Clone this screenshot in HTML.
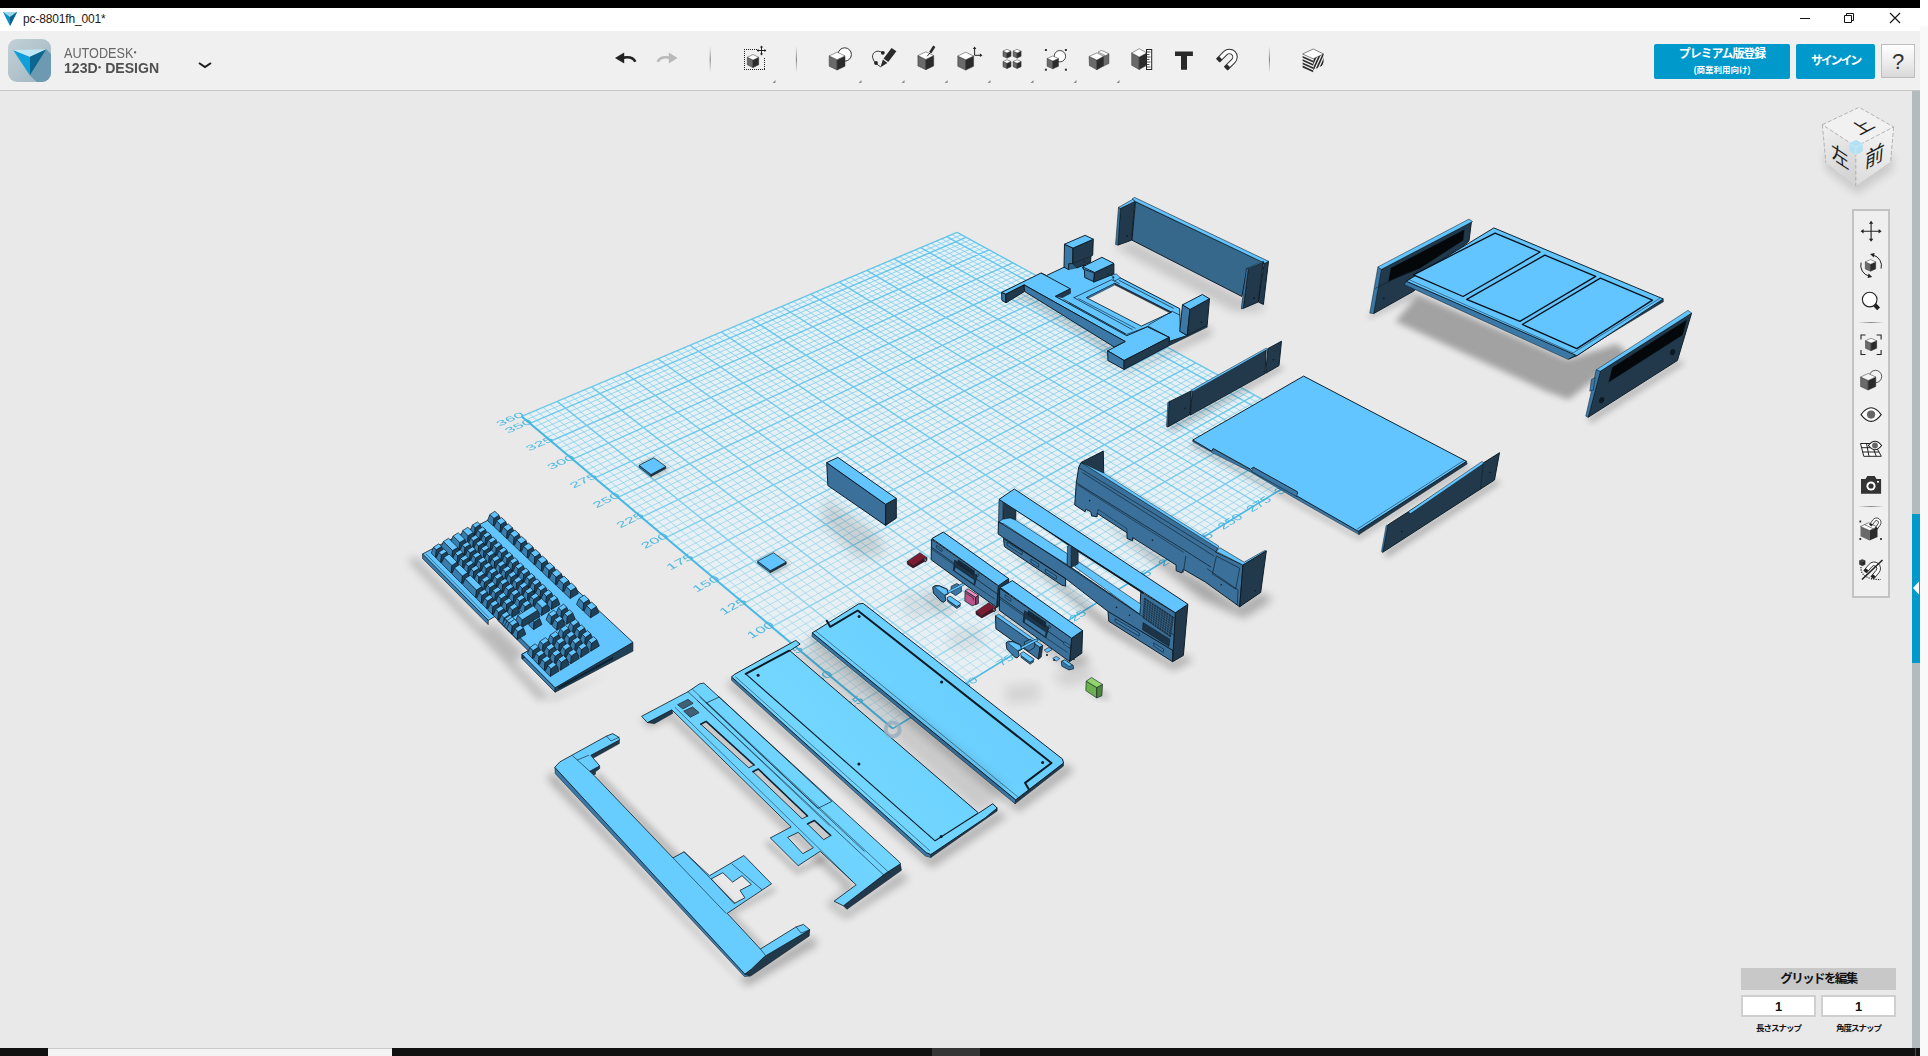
<!DOCTYPE html>
<html lang="ja"><head><meta charset="utf-8"><title>pc-8801fh_001* - 123D Design</title>
<style>
html,body{margin:0;padding:0;}
body{width:1928px;height:1056px;overflow:hidden;position:relative;background:#e9e9e9;font-family:"Liberation Sans","Noto Sans CJK JP",sans-serif;}
#scene{position:absolute;left:0;top:0;}
.abs{position:absolute;}
#topblack{left:0;top:0;width:1920px;height:8px;background:#000;}
#titlebar{left:0;top:8px;width:1920px;height:23px;background:#fff;}
#title{left:23px;top:12px;font-size:12px;line-height:15px;color:#1a1a1a;letter-spacing:-0.15px;}
#rightwhite{left:1920px;top:0;width:8px;height:26px;background:#fff;}
#rightgray{left:1920px;top:26px;width:8px;height:1030px;background:#f9f9f9;}
#toolbar{left:0;top:31px;width:1920px;height:59px;background:#f0f0f0;border-bottom:1px solid #c6c6c6;}
#brand1{left:64px;top:45px;font-size:14.3px;line-height:16px;color:#666;transform-origin:0 0;transform:scaleX(0.885);white-space:nowrap;}
#brand2{left:64px;top:60px;font-size:14.3px;line-height:16px;color:#505050;font-weight:bold;transform-origin:0 0;transform:scaleX(0.985);white-space:nowrap;}
#brand1 sup,#brand2 sup{font-size:6px;vertical-align:top;position:relative;top:-1px;}
.bluebtn{background:#0099cc;color:#fff;border-radius:2px;text-align:center;font-weight:bold;white-space:nowrap;}
#premium{left:1654px;top:44px;width:136px;height:35px;}
#premium .l1{font-size:12px;line-height:14px;margin-top:3px;letter-spacing:-1.1px;}
#premium .l2{font-size:8.5px;line-height:10px;margin-top:4px;font-weight:bold;}
#signin{left:1796px;top:44px;width:79px;height:35px;font-size:12px;line-height:35px;letter-spacing:-2.2px;}
#help{left:1881px;top:44px;width:32px;height:32px;border:1px solid #bdbdbd;background:linear-gradient(#ffffff,#ececec 55%,#d9d9d9);font-size:22px;line-height:33px;text-align:center;color:#333;}
#rstrip{left:1912px;top:91px;width:8px;height:957px;background:#b3bcbc;}
#rstripblue{left:1912px;top:514px;width:8px;height:149px;background:#0099cc;}
#navpanel{left:1852px;top:209px;width:34px;height:385px;background:#efefef;border:2px solid #c3c3c3;box-sizing:content-box;}
#gridedit{left:1741px;top:968px;width:155px;height:22px;background:#c8c8c8;font-size:12.5px;line-height:22px;font-weight:bold;text-align:center;color:#111;letter-spacing:-1.6px;}
.snapbox{top:995px;width:75px;height:22px;background:#fff;border:2px solid #cfcfcf;box-sizing:border-box;font-size:13px;line-height:20px;text-align:center;color:#111;font-weight:bold;}
.snaplbl{top:1022px;width:75px;font-size:8.5px;line-height:12px;font-weight:bold;text-align:center;color:#111;letter-spacing:-1px;white-space:nowrap;}
#taskbar{left:0;top:1048px;width:1920px;height:8px;background:#111;}
#tasksearch{left:48px;top:1048px;width:344px;height:8px;background:#f3f3f3;border-top:1px solid #c9c9c9;box-sizing:border-box;}
#taskactive{left:932px;top:1048px;width:48px;height:8px;background:#353535;}
#chromesvg{position:absolute;left:0;top:0;}
</style></head><body>
<svg id="scene" width="1928" height="1056" viewBox="0 0 1928 1056"><defs><filter id="b2" x="-30%" y="-30%" width="160%" height="160%"><feGaussianBlur stdDeviation="2"/></filter><filter id="b3" x="-30%" y="-30%" width="160%" height="160%"><feGaussianBlur stdDeviation="3"/></filter><filter id="b4" x="-30%" y="-30%" width="160%" height="160%"><feGaussianBlur stdDeviation="4"/></filter><filter id="b5" x="-30%" y="-30%" width="160%" height="160%"><feGaussianBlur stdDeviation="5"/></filter><filter id="b6" x="-30%" y="-30%" width="160%" height="160%"><feGaussianBlur stdDeviation="6"/></filter><filter id="b8" x="-30%" y="-30%" width="160%" height="160%"><feGaussianBlur stdDeviation="8"/></filter><filter id="b10" x="-30%" y="-30%" width="160%" height="160%"><feGaussianBlur stdDeviation="10"/></filter><filter id="b12" x="-30%" y="-30%" width="160%" height="160%"><feGaussianBlur stdDeviation="12"/></filter></defs><linearGradient id="gbase" gradientUnits="userSpaceOnUse" x1="0" y1="232" x2="0" y2="728"><stop offset="0" stop-color="#e4f1f7"/><stop offset="1" stop-color="#e9eff2"/></linearGradient><polygon points="892.7,728.6 521.7,416.4 957.0,232.3 1349.5,447.0" fill="url(#gbase)"/><linearGradient id="gfade" gradientUnits="userSpaceOnUse" x1="0" y1="232" x2="0" y2="728"><stop offset="0" stop-color="#fff"/><stop offset="0.45" stop-color="#e0e0e0"/><stop offset="1" stop-color="#757575"/></linearGradient><mask id="gmask" maskUnits="userSpaceOnUse" x="0" y="0" width="1928" height="1056"><rect x="0" y="0" width="1928" height="1056" fill="url(#gfade)"/></mask><g mask="url(#gmask)"><path d="M886.2 723.2 L1342.9 443.4 M900.5 723.8 L528.8 413.4 M879.8 717.8 L1336.4 439.8 M908.2 719.0 L535.9 410.4 M873.4 712.4 L1329.9 436.3 M915.9 714.3 L543.0 407.4 M867.1 707.1 L1323.4 432.7 M923.6 709.6 L550.1 404.4 M854.6 696.5 L1310.6 425.7 M938.7 700.2 L564.0 398.5 M848.4 691.3 L1304.3 422.2 M946.2 695.6 L570.9 395.6 M842.3 686.2 L1297.9 418.8 M953.7 691.0 L577.8 392.7 M836.2 681.0 L1291.7 415.4 M961.1 686.4 L584.7 389.8 M824.1 670.8 L1279.2 408.5 M975.7 677.4 L598.3 384.0 M818.1 665.8 L1273.0 405.2 M983.0 672.9 L605.1 381.1 M812.1 660.8 L1266.9 401.8 M990.2 668.5 L611.8 378.3 M806.2 655.8 L1260.8 398.5 M997.4 664.0 L618.5 375.5 M794.6 646.0 L1248.7 391.8 M1011.6 655.3 L631.8 369.8 M788.8 641.2 L1242.7 388.6 M1018.7 650.9 L638.4 367.1 M783.0 636.3 L1236.7 385.3 M1025.7 646.6 L644.9 364.3 M777.3 631.5 L1230.8 382.0 M1032.7 642.3 L651.4 361.5 M766.0 622.0 L1219.0 375.6 M1046.5 633.8 L664.4 356.0 M760.5 617.3 L1213.1 372.4 M1053.3 629.6 L670.8 353.3 M754.9 612.6 L1207.3 369.2 M1060.1 625.4 L677.2 350.6 M749.4 608.0 L1201.5 366.1 M1066.8 621.2 L683.6 347.9 M738.5 598.8 L1190.1 359.8 M1080.2 613.0 L696.3 342.6 M733.1 594.3 L1184.4 356.7 M1086.9 608.9 L702.5 339.9 M727.7 589.7 L1178.8 353.6 M1093.5 604.8 L708.8 337.3 M722.4 585.3 L1173.1 350.5 M1100.0 600.8 L715.0 334.6 M711.8 576.4 L1162.0 344.4 M1113.0 592.8 L727.4 329.4 M706.6 572.0 L1156.4 341.4 M1119.5 588.8 L733.5 326.8 M701.4 567.6 L1150.9 338.4 M1125.9 584.9 L739.6 324.2 M696.2 563.2 L1145.5 335.4 M1132.2 580.9 L745.7 321.7 M685.9 554.6 L1134.6 329.4 M1144.9 573.2 L757.7 316.6 M680.9 550.4 L1129.2 326.5 M1151.1 569.3 L763.7 314.0 M675.8 546.1 L1123.9 323.6 M1157.3 565.5 L769.7 311.5 M670.8 541.9 L1118.5 320.7 M1163.5 561.6 L775.6 309.0 M660.9 533.6 L1107.9 314.9 M1175.8 554.1 L787.4 304.0 M656.0 529.4 L1102.7 312.0 M1181.9 550.3 L793.2 301.6 M651.1 525.3 L1097.5 309.1 M1187.9 546.6 L799.1 299.1 M646.3 521.2 L1092.3 306.3 M1193.9 542.9 L804.9 296.6 M636.7 513.1 L1082.0 300.7 M1205.9 535.6 L816.4 291.8 M631.9 509.1 L1076.9 297.9 M1211.8 531.9 L822.1 289.4 M627.2 505.2 L1071.8 295.1 M1217.6 528.3 L827.8 286.9 M622.5 501.2 L1066.7 292.3 M1223.5 524.7 L833.5 284.5 M613.1 493.4 L1056.7 286.8 M1235.1 517.5 L844.7 279.8 M608.5 489.5 L1051.7 284.1 M1240.8 514.0 L850.3 277.4 M603.9 485.6 L1046.7 281.4 M1246.6 510.5 L855.9 275.1 M599.4 481.8 L1041.8 278.7 M1252.2 507.0 L861.4 272.7 M590.3 474.2 L1032.0 273.3 M1263.5 500.0 L872.4 268.1 M585.8 470.4 L1027.1 270.7 M1269.1 496.6 L877.9 265.8 M581.4 466.6 L1022.3 268.0 M1274.7 493.1 L883.3 263.5 M577.0 462.9 L1017.5 265.4 M1280.2 489.7 L888.7 261.2 M568.2 455.5 L1007.9 260.1 M1291.2 482.9 L899.5 256.6 M563.8 451.9 L1003.2 257.6 M1296.6 479.6 L904.8 254.4 M559.5 448.2 L998.4 255.0 M1302.0 476.3 L910.2 252.1 M555.2 444.6 L993.8 252.4 M1307.4 472.9 L915.4 249.9 M546.7 437.4 L984.4 247.3 M1318.1 466.3 L926.0 245.4 M542.5 433.9 L979.8 244.8 M1323.4 463.1 L931.2 243.2 M538.3 430.3 L975.2 242.3 M1328.7 459.8 L936.4 241.0 M534.1 426.8 L970.6 239.7 M1333.9 456.6 L941.6 238.8 M525.8 419.9 L961.5 234.8 M1344.3 450.2 L951.9 234.5" stroke="#74c9e8" stroke-width="0.9" fill="none" opacity="0.8"/><path d="M892.7 728.6 L1349.5 447.0 M892.7 728.6 L521.7 416.4 M860.8 701.8 L1317.0 429.2 M931.2 704.9 L557.1 401.4 M830.1 675.9 L1285.4 411.9 M968.4 681.9 L591.5 386.9 M800.4 650.9 L1254.7 395.1 M1004.6 659.6 L625.1 372.7 M771.7 626.8 L1224.8 378.8 M1039.6 638.1 L657.9 358.8 M743.9 603.4 L1195.8 362.9 M1073.6 617.1 L690.0 345.2 M717.1 580.8 L1167.5 347.5 M1106.5 596.8 L721.2 332.0 M691.0 558.9 L1140.0 332.4 M1138.6 577.0 L751.7 319.1 M665.9 537.7 L1113.2 317.8 M1169.7 557.9 L781.5 306.5 M641.5 517.2 L1087.1 303.5 M1199.9 539.2 L810.6 294.2 M617.8 497.3 L1061.7 289.6 M1229.3 521.1 L839.1 282.2 M594.8 477.9 L1036.9 276.0 M1257.9 503.5 L866.9 270.4 M572.6 459.2 L1012.7 262.8 M1285.7 486.3 L894.1 258.9 M550.9 441.0 L989.1 249.8 M1312.8 469.6 L920.7 247.6 M529.9 423.3 L966.1 237.3 M1339.1 453.4 L946.7 236.6 M521.7 416.4 L957.0 232.3 M1349.5 447.0 L957.0 232.3" stroke="#4fbde6" stroke-width="1.4" fill="none" opacity="0.85"/></g><path d="M521.7 416.4 L892.7 728.6" stroke="#3db3e2" stroke-width="2" fill="none" opacity="0.85"/><path d="M892.7 728.6 L1349.5 447.0" stroke="#3db3e2" stroke-width="1.5" fill="none" opacity="0.8"/><text transform="matrix(0.9210 -0.3895 0.4224 0.3544 524.56 415.19)" font-family="Liberation Sans, sans-serif" font-size="16.5" text-anchor="end" y="1.5" fill="#3fb4e0" opacity="0.9">360</text><text transform="matrix(0.9198 -0.3924 0.4256 0.3570 532.80 422.10)" font-family="Liberation Sans, sans-serif" font-size="16.5" text-anchor="end" y="1.5" fill="#3fb4e0" opacity="0.9">350</text><text transform="matrix(0.9166 -0.3999 0.4335 0.3637 553.83 439.74)" font-family="Liberation Sans, sans-serif" font-size="16.5" text-anchor="end" y="1.5" fill="#3fb4e0" opacity="0.9">325</text><text transform="matrix(0.9132 -0.4076 0.4417 0.3706 575.47 457.90)" font-family="Liberation Sans, sans-serif" font-size="16.5" text-anchor="end" y="1.5" fill="#3fb4e0" opacity="0.9">300</text><text transform="matrix(0.9096 -0.4156 0.4503 0.3778 597.77 476.61)" font-family="Liberation Sans, sans-serif" font-size="16.5" text-anchor="end" y="1.5" fill="#3fb4e0" opacity="0.9">275</text><text transform="matrix(0.9057 -0.4238 0.4591 0.3852 620.74 495.88)" font-family="Liberation Sans, sans-serif" font-size="16.5" text-anchor="end" y="1.5" fill="#3fb4e0" opacity="0.9">250</text><text transform="matrix(0.9017 -0.4324 0.4682 0.3928 644.42 515.75)" font-family="Liberation Sans, sans-serif" font-size="16.5" text-anchor="end" y="1.5" fill="#3fb4e0" opacity="0.9">225</text><text transform="matrix(0.8974 -0.4412 0.4776 0.4007 668.85 536.25)" font-family="Liberation Sans, sans-serif" font-size="16.5" text-anchor="end" y="1.5" fill="#3fb4e0" opacity="0.9">200</text><text transform="matrix(0.8928 -0.4504 0.4874 0.4089 694.05 557.39)" font-family="Liberation Sans, sans-serif" font-size="16.5" text-anchor="end" y="1.5" fill="#3fb4e0" opacity="0.9">175</text><text transform="matrix(0.8880 -0.4599 0.4976 0.4175 720.08 579.22)" font-family="Liberation Sans, sans-serif" font-size="16.5" text-anchor="end" y="1.5" fill="#3fb4e0" opacity="0.9">150</text><text transform="matrix(0.8828 -0.4698 0.5081 0.4263 746.96 601.78)" font-family="Liberation Sans, sans-serif" font-size="16.5" text-anchor="end" y="1.5" fill="#3fb4e0" opacity="0.9">125</text><text transform="matrix(0.8773 -0.4800 0.5190 0.4354 774.73 625.08)" font-family="Liberation Sans, sans-serif" font-size="16.5" text-anchor="end" y="1.5" fill="#3fb4e0" opacity="0.9">100</text><text transform="matrix(0.8714 -0.4906 0.5303 0.4449 803.46 649.18)" font-family="Liberation Sans, sans-serif" font-size="16.5" text-anchor="end" y="1.5" fill="#3fb4e0" opacity="0.9">75</text><text transform="matrix(0.8651 -0.5016 0.5420 0.4547 833.18 674.12)" font-family="Liberation Sans, sans-serif" font-size="16.5" text-anchor="end" y="1.5" fill="#3fb4e0" opacity="0.9">50</text><text transform="matrix(0.8584 -0.5129 0.5541 0.4649 863.95 699.93)" font-family="Liberation Sans, sans-serif" font-size="16.5" text-anchor="end" y="1.5" fill="#3fb4e0" opacity="0.9">25</text><text transform="matrix(0.8511 -0.5250 0.5280 0.4282 931.82 705.41)" font-family="Liberation Sans, sans-serif" font-size="14.5" text-anchor="middle" y="5.2" fill="#3fb4e0" opacity="0.9">25</text><text transform="matrix(0.8511 -0.5250 0.5472 0.4283 969.09 682.42)" font-family="Liberation Sans, sans-serif" font-size="14.5" text-anchor="middle" y="5.2" fill="#3fb4e0" opacity="0.9">50</text><text transform="matrix(0.8511 -0.5250 0.5664 0.4284 1005.21 660.14)" font-family="Liberation Sans, sans-serif" font-size="14.5" text-anchor="middle" y="5.2" fill="#3fb4e0" opacity="0.9">75</text><text transform="matrix(0.8511 -0.5250 0.5856 0.4286 1040.24 638.54)" font-family="Liberation Sans, sans-serif" font-size="14.5" text-anchor="middle" y="5.2" fill="#3fb4e0" opacity="0.9">100</text><text transform="matrix(0.8511 -0.5250 0.6049 0.4287 1074.22 617.57)" font-family="Liberation Sans, sans-serif" font-size="14.5" text-anchor="middle" y="5.2" fill="#3fb4e0" opacity="0.9">125</text><text transform="matrix(0.8511 -0.5250 0.6241 0.4288 1107.20 597.23)" font-family="Liberation Sans, sans-serif" font-size="14.5" text-anchor="middle" y="5.2" fill="#3fb4e0" opacity="0.9">150</text><text transform="matrix(0.8511 -0.5250 0.6433 0.4289 1139.23 577.47)" font-family="Liberation Sans, sans-serif" font-size="14.5" text-anchor="middle" y="5.2" fill="#3fb4e0" opacity="0.9">175</text><text transform="matrix(0.8511 -0.5250 0.6625 0.4290 1170.34 558.28)" font-family="Liberation Sans, sans-serif" font-size="14.5" text-anchor="middle" y="5.2" fill="#3fb4e0" opacity="0.9">200</text><text transform="matrix(0.8511 -0.5250 0.6817 0.4291 1200.57 539.63)" font-family="Liberation Sans, sans-serif" font-size="14.5" text-anchor="middle" y="5.2" fill="#3fb4e0" opacity="0.9">225</text><text transform="matrix(0.8511 -0.5250 0.7010 0.4292 1229.97 521.50)" font-family="Liberation Sans, sans-serif" font-size="14.5" text-anchor="middle" y="5.2" fill="#3fb4e0" opacity="0.9">250</text><text transform="matrix(0.8511 -0.5250 0.7202 0.4293 1258.56 503.87)" font-family="Liberation Sans, sans-serif" font-size="14.5" text-anchor="middle" y="5.2" fill="#3fb4e0" opacity="0.9">275</text><text transform="matrix(0.8511 -0.5250 0.7394 0.4294 1286.37 486.71)" font-family="Liberation Sans, sans-serif" font-size="14.5" text-anchor="middle" y="5.2" fill="#3fb4e0" opacity="0.9">300</text><text transform="matrix(0.8511 -0.5250 0.7586 0.4295 1313.45 470.01)" font-family="Liberation Sans, sans-serif" font-size="14.5" text-anchor="middle" y="5.2" fill="#3fb4e0" opacity="0.9">325</text><text transform="matrix(0.8511 -0.5250 0.7779 0.4297 1339.81 453.75)" font-family="Liberation Sans, sans-serif" font-size="14.5" text-anchor="middle" y="5.2" fill="#3fb4e0" opacity="0.9">350</text><text transform="matrix(0.8511 -0.5250 0.7856 0.4297 1350.16 447.36)" font-family="Liberation Sans, sans-serif" font-size="14.5" text-anchor="middle" y="5.2" fill="#3fb4e0" opacity="0.9">360</text><polygon points="1112.8,245.1 1133.2,241.3 1241.9,297.5 1266.2,303.9 1259.8,311.6 1234.3,311.6 1132.0,256.6" fill="#000" opacity="0.15" filter="url(#b5)"/><polygon points="1264.3,262.7 1268.5,261.3 1263.4,304.5 1258.3,302.0" fill="#21394b" stroke="#0b1a25" stroke-width="0.95" stroke-linejoin="round"/><polygon points="1135.5,201.9 1264.7,263.0 1247.0,268.7 1241.9,296.5 1132.0,240.2" fill="#36688b" stroke="#0b1a25" stroke-width="0.95" stroke-linejoin="round"/><polygon points="1132.0,199.1 1134.5,197.4 1268.5,261.3 1264.9,263.3 1135.8,201.6" fill="#63c5ff" stroke="#0b1a25" stroke-width="0.6" stroke-linejoin="round"/><polygon points="1120.5,208.3 1134.8,201.4 1131.6,240.2 1117.9,245.1" fill="#21394b" stroke="#0b1a25" stroke-width="0.95" stroke-linejoin="round"/><polygon points="1118.5,207.4 1120.5,208.3 1117.9,245.1 1115.6,244.5" fill="#3b78a6" stroke="#0b1a25" stroke-width="0.6" stroke-linejoin="round"/><polygon points="1118.5,207.4 1132.6,199.4 1134.8,201.4 1120.5,208.3" fill="#63c5ff" stroke="#0b1a25" stroke-width="0.6" stroke-linejoin="round"/><polygon points="1248.3,268.4 1263.4,261.7 1258.2,302.0 1243.2,308.4" fill="#21394b" stroke="#0b1a25" stroke-width="0.95" stroke-linejoin="round"/><polygon points="1246.4,268.7 1248.3,268.4 1243.2,308.4 1241.3,308.8" fill="#3b78a6" stroke="#0b1a25" stroke-width="0.6" stroke-linejoin="round"/><polygon points="1246.4,268.7 1261.4,261.5 1263.4,261.7 1248.3,268.4" fill="#63c5ff" stroke="#0b1a25" stroke-width="0.5" stroke-linejoin="round"/><circle cx="1127.2" cy="235.8" r="0.9" fill="#0b1a25"/><circle cx="1254.1" cy="298.2" r="0.9" fill="#0b1a25"/><polygon points="1003.2,302.8 1025.2,291.8 1114.5,346.7 1109.0,361.8 1124.1,370.1 1170.8,346.7 1209.2,326.1 1212.0,334.4 1125.5,372.8 1104.9,361.8 1102.1,348.1 1024.5,298.7" fill="#000" opacity="0.22" filter="url(#b4)"/><polygon points="1041.0,273.0 1046.5,275.5 1064.4,267.1 1076.0,261.9 1082.9,265.0 1114.5,276.0 1120.2,277.8 1179.7,308.6 1180.4,331.6 1187.3,335.5 1169.4,341.5 1169.1,337.4 1147.4,326.8 1124.8,341.5 1055.4,296.3" fill="#63c5ff" stroke="#0b1a25" stroke-width="0.95" stroke-linejoin="round"/><polygon points="1086.3,297.6 1114.8,283.3 1171.5,312.1 1141.3,326.1" fill="#e9e9e9" stroke="#0b1a25" stroke-width="0.8" stroke-linejoin="round"/><polygon points="1114.8,283.3 1171.5,312.1 1170.1,313.1 1114.8,284.9" fill="#21394b" stroke="#0b1a25" stroke-width="0.4" stroke-linejoin="round"/><polygon points="1086.3,297.6 1114.8,283.3 1114.8,284.9 1089.1,298.0" fill="#3b78a6" stroke="#0b1a25" stroke-width="0.4" stroke-linejoin="round"/><polyline points="1074.0,297.6 1111.7,279.7 1119.3,283.6" fill="none" stroke="#0b1a25" stroke-width="0.7" stroke-linejoin="round" stroke-linecap="round"/><polyline points="1074.0,297.6 1132.3,329.6" fill="none" stroke="#0b1a25" stroke-width="0.7" stroke-linejoin="round" stroke-linecap="round"/><polyline points="1078.8,298.7 1135.1,328.2" fill="none" stroke="#0b1a25" stroke-width="0.6" stroke-linejoin="round" stroke-linecap="round"/><polyline points="1069.2,302.8 1126.8,334.4 1147.4,326.8" fill="none" stroke="#0b1a25" stroke-width="0.7" stroke-linejoin="round" stroke-linecap="round"/><polyline points="1063.7,299.4 1124.8,333.7" fill="none" stroke="#0b1a25" stroke-width="0.6" stroke-linejoin="round" stroke-linecap="round"/><polyline points="1119.3,280.5 1173.5,308.3" fill="none" stroke="#0b1a25" stroke-width="0.7" stroke-linejoin="round" stroke-linecap="round"/><polyline points="1148.1,326.1 1169.4,337.4" fill="none" stroke="#0b1a25" stroke-width="0.7" stroke-linejoin="round" stroke-linecap="round"/><polyline points="1148.8,324.8 1172.2,311.3 1179.7,315.1" fill="none" stroke="#0b1a25" stroke-width="0.7" stroke-linejoin="round" stroke-linecap="round"/><polygon points="1001.6,292.5 1041.0,273.0 1070.3,288.8 1055.4,296.3 1126.8,335.7 1147.4,326.8 1169.1,337.4 1124.1,360.5 1107.6,350.8 1125.2,341.5 1024.1,284.9 1005.7,294.3" fill="#63c5ff" stroke="#0b1a25" stroke-width="0.95" stroke-linejoin="round"/><polygon points="1055.4,296.3 1070.3,288.8 1070.5,293.2 1062.3,297.6" fill="#21394b" stroke="#0b1a25" stroke-width="0.6" stroke-linejoin="round"/><polygon points="1001.6,292.5 1005.7,294.3 1006.0,302.8 1001.9,300.3" fill="#3b78a6" stroke="#0b1a25" stroke-width="0.95" stroke-linejoin="round"/><polygon points="1005.7,294.3 1024.1,284.9 1024.5,291.4 1006.0,302.8" fill="#21394b" stroke="#0b1a25" stroke-width="0.95" stroke-linejoin="round"/><polygon points="1024.1,284.9 1125.2,341.5 1114.2,347.0 1024.5,291.4" fill="#3b78a6" stroke="#0b1a25" stroke-width="0.95" stroke-linejoin="round"/><polygon points="1107.6,350.8 1124.1,360.5 1124.1,369.4 1107.9,360.5" fill="#3b78a6" stroke="#0b1a25" stroke-width="0.95" stroke-linejoin="round"/><polygon points="1124.1,360.5 1169.1,337.4 1169.4,345.4 1124.1,369.4" fill="#21394b" stroke="#0b1a25" stroke-width="0.95" stroke-linejoin="round"/><polygon points="1169.4,341.5 1187.3,335.7 1207.2,325.3 1207.4,327.1 1169.7,345.4" fill="#21394b" stroke="#0b1a25" stroke-width="0.5" stroke-linejoin="round"/><polygon points="1064.5,244.3 1073.0,248.2 1072.7,263.7 1068.8,263.7 1068.4,269.6 1064.0,267.1" fill="#3b78a6" stroke="#0b1a25" stroke-width="0.95" stroke-linejoin="round"/><polygon points="1073.0,248.2 1093.3,239.2 1092.7,255.2 1090.9,256.3 1090.6,262.3 1076.9,268.0 1072.7,263.7" fill="#21394b" stroke="#0b1a25" stroke-width="0.95" stroke-linejoin="round"/><polygon points="1064.5,244.2 1085.1,235.3 1093.3,239.2 1073.0,248.1" fill="#63c5ff" stroke="#0b1a25" stroke-width="0.95" stroke-linejoin="round"/><polygon points="1068.8,263.7 1072.8,263.7 1076.9,267.8 1068.6,269.6" fill="#2f5f82" stroke="#0b1a25" stroke-width="0.5" stroke-linejoin="round"/><polyline points="1072.7,263.7 1076.9,261.9 1090.9,256.3" fill="none" stroke="#0b1a25" stroke-width="0.5" stroke-linejoin="round" stroke-linecap="round"/><circle cx="1084.6" cy="261.6" r="0.7" fill="#0b1a25"/><polygon points="1082.3,267.3 1084.4,269.4 1094.3,272.9 1094.0,281.8 1084.8,277.6 1084.4,270.5" fill="#3b78a6" stroke="#0b1a25" stroke-width="0.95" stroke-linejoin="round"/><polygon points="1094.7,272.5 1113.9,263.7 1113.9,274.0 1093.6,282.2" fill="#21394b" stroke="#0b1a25" stroke-width="0.95" stroke-linejoin="round"/><polygon points="1082.6,266.9 1101.8,257.3 1113.9,263.4 1094.7,272.5" fill="#63c5ff" stroke="#0b1a25" stroke-width="0.95" stroke-linejoin="round"/><polygon points="1111.7,275.1 1116.4,274.0 1120.6,277.9 1114.2,281.1" fill="#63c5ff" stroke="#0b1a25" stroke-width="0.6" stroke-linejoin="round"/><circle cx="1113.5" cy="277.4" r="0.8" fill="#0b1a25"/><circle cx="1108.2" cy="274.0" r="0.7" fill="#0b1a25"/><polygon points="1182.5,304.8 1190.0,309.4 1187.3,335.5 1179.7,331.3" fill="#3b78a6" stroke="#0b1a25" stroke-width="0.95" stroke-linejoin="round"/><polygon points="1190.0,309.4 1209.5,298.7 1207.2,325.0 1187.3,335.5" fill="#21394b" stroke="#0b1a25" stroke-width="0.95" stroke-linejoin="round"/><polygon points="1182.5,304.8 1202.4,294.5 1209.5,298.7 1190.0,309.4" fill="#63c5ff" stroke="#0b1a25" stroke-width="0.95" stroke-linejoin="round"/><circle cx="1201.4" cy="322.3" r="0.9" fill="#0b1a25"/><polygon points="1166.8,426.5 1190.3,415.1 1265.3,373.6 1279.0,365.6 1284.1,368.2 1195.5,419.3 1171.6,431.2" fill="#000" opacity="0.25" filter="url(#b3)"/><polygon points="1169.0,401.9 1191.2,390.9 1190.0,414.5 1167.7,427.0" fill="#21394b" stroke="#0b1a25" stroke-width="0.95" stroke-linejoin="round"/><polygon points="1167.8,402.3 1169.0,401.9 1167.7,427.0 1166.5,426.5" fill="#3b78a6" stroke="#0b1a25" stroke-width="0.5" stroke-linejoin="round"/><polygon points="1267.9,348.6 1281.5,341.2 1279.0,365.6 1265.7,373.3" fill="#21394b" stroke="#0b1a25" stroke-width="0.95" stroke-linejoin="round"/><polygon points="1192.4,390.3 1266.2,349.8 1265.0,373.6 1190.3,415.1" fill="#21394b" stroke="#0b1a25" stroke-width="0.95" stroke-linejoin="round"/><polygon points="1191.2,390.0 1266.2,348.2 1267.9,349.1 1192.9,391.4" fill="#63c5ff" stroke="#0b1a25" stroke-width="0.5" stroke-linejoin="round"/><circle cx="1184.9" cy="408.2" r="0.8" fill="#0b1a25"/><circle cx="1273.5" cy="359.7" r="0.8" fill="#0b1a25"/><polygon points="1192.8,441.7 1358.1,535.5 1468.1,463.9 1469.8,467.3 1359.0,538.9 1190.2,445.1" fill="#000" opacity="0.3" filter="url(#b3)"/><polygon points="1358.1,531.2 1466.4,461.3 1467.2,463.9 1359.0,534.6" fill="#21394b" stroke="#0b1a25" stroke-width="0.5" stroke-linejoin="round"/><polygon points="1192.8,440.0 1211.5,451.1 1213.2,448.9 1250.7,469.7 1297.6,495.4 1358.1,531.2 1359.0,534.6 1295.9,498.8 1251.6,472.4 1212.4,452.8 1192.8,441.7" fill="#3b78a6" stroke="#0b1a25" stroke-width="0.5" stroke-linejoin="round"/><polygon points="1303.6,376.1 1466.4,461.3 1358.1,531.2 1295.9,495.4 1297.6,492.0 1253.3,467.3 1250.7,469.3 1213.2,448.5 1211.5,451.1 1192.8,440.0" fill="#63c5ff" stroke="#0b1a25" stroke-width="0.95" stroke-linejoin="round"/><polygon points="1253.3,467.3 1297.6,492.0 1296.8,496.6 1251.6,471.5" fill="#3b78a6" stroke="#0b1a25" stroke-width="0.6" stroke-linejoin="round"/><polyline points="1357.3,529.0 1463.8,460.5" fill="none" stroke="#0b1a25" stroke-width="0.5" stroke-linejoin="round" stroke-linecap="round"/><polygon points="1382.7,552.3 1494.5,480.0 1501.4,482.3 1387.7,557.3" fill="#000" opacity="0.25" filter="url(#b3)"/><polygon points="1387.7,525.0 1408.2,511.8 1483.2,463.0 1499.5,452.7 1494.5,480.0 1382.7,552.3" fill="#21394b" stroke="#0b1a25" stroke-width="0.95" stroke-linejoin="round"/><polygon points="1408.2,511.8 1482.0,461.4 1484.3,463.0 1410.5,513.6" fill="#63c5ff" stroke="#0b1a25" stroke-width="0.5" stroke-linejoin="round"/><polyline points="1483.2,463.0 1480.5,489.1" fill="none" stroke="#0b1a25" stroke-width="0.5" stroke-linejoin="round" stroke-linecap="round"/><polygon points="1386.1,525.5 1387.7,525.0 1382.7,552.3 1381.4,551.6" fill="#3b78a6" stroke="#0b1a25" stroke-width="0.4" stroke-linejoin="round"/><circle cx="1401.8" cy="531.6" r="0.8" fill="#0b1a25"/><circle cx="1490.0" cy="472.5" r="0.8" fill="#0b1a25"/><polygon points="1370.3,313.6 1413.4,290.6 1418.1,295.4 1368.4,319.0" fill="#000" opacity="0.2" filter="url(#b3)"/><polygon points="1381.4,269.3 1471.4,222.0 1469.0,240.9 1439.4,268.1 1413.4,291.3 1373.6,313.6 1375.5,284.7" fill="#21394b" stroke="#0b1a25" stroke-width="0.95" stroke-linejoin="round"/><polygon points="1377.9,266.9 1381.4,269.3 1373.6,313.6 1369.8,313.1" fill="#3b78a6" stroke="#0b1a25" stroke-width="0.5" stroke-linejoin="round"/><polygon points="1377.9,266.9 1469.0,219.1 1472.6,221.5 1381.4,269.3" fill="#63c5ff" stroke="#0b1a25" stroke-width="0.5" stroke-linejoin="round"/><polygon points="1390.9,268.1 1464.3,229.8 1463.1,240.2 1420.5,268.1 1388.5,281.2" fill="#05080a" stroke="#0b1a25" stroke-width="0.3" stroke-linejoin="round"/><polyline points="1375.5,288.3 1408.7,271.7" fill="none" stroke="#0b1a25" stroke-width="0.5" stroke-linejoin="round" stroke-linecap="round"/><circle cx="1383.8" cy="298.4" r="0.8" fill="#0b1a25"/><polygon points="1395.6,321.4 1418.1,294.2 1567.3,359.3 1617.0,343.9 1627.7,353.4 1568.5,399.5 1546.0,391.2" fill="#000" opacity="0.3" filter="url(#b3)"/><polygon points="1406.3,281.2 1576.8,355.7 1567.8,359.3 1404.4,284.7" fill="#3b78a6" stroke="#0b1a25" stroke-width="0.5" stroke-linejoin="round"/><polygon points="1576.8,355.7 1663.2,298.9 1663.4,301.8 1568.5,359.3" fill="#21394b" stroke="#0b1a25" stroke-width="0.5" stroke-linejoin="round"/><polygon points="1493.9,227.9 1663.2,298.9 1576.8,355.7 1406.3,281.2" fill="#63c5ff" stroke="#0b1a25" stroke-width="0.95" stroke-linejoin="round"/><polyline points="1408.7,279.5 1573.2,352.9 1659.6,298.4" fill="none" stroke="#0b1a25" stroke-width="0.5" stroke-linejoin="round" stroke-linecap="round"/><polygon points="1413.4,274.8 1495.1,233.1 1540.1,252.0 1463.1,296.5" fill="#63c5ff" stroke="#05101a" stroke-width="1.3" stroke-linejoin="round"/><polygon points="1466.7,299.4 1544.8,255.1 1595.7,276.4 1519.9,321.4" fill="#63c5ff" stroke="#05101a" stroke-width="1.3" stroke-linejoin="round"/><polygon points="1522.3,324.5 1600.4,278.1 1652.5,300.1 1576.8,348.6" fill="#63c5ff" stroke="#05101a" stroke-width="1.3" stroke-linejoin="round"/><polygon points="1587.4,417.3 1677.4,360.5 1685.7,362.8 1591.0,423.2" fill="#000" opacity="0.22" filter="url(#b3)"/><polygon points="1600.4,371.1 1691.6,313.1 1677.4,360.5 1588.1,417.3" fill="#21394b" stroke="#0b1a25" stroke-width="0.95" stroke-linejoin="round"/><polygon points="1596.2,369.9 1600.4,371.1 1588.1,417.3 1585.8,416.1" fill="#3b78a6" stroke="#0b1a25" stroke-width="0.5" stroke-linejoin="round"/><polygon points="1591.4,379.4 1595.2,377.5 1593.3,390.1 1589.8,391.2" fill="#3b78a6" stroke="#0b1a25" stroke-width="0.5" stroke-linejoin="round"/><polygon points="1596.2,369.9 1688.0,310.3 1691.6,313.1 1600.4,371.1" fill="#63c5ff" stroke="#0b1a25" stroke-width="0.5" stroke-linejoin="round"/><polygon points="1612.3,367.6 1686.9,319.7 1682.6,334.9 1608.7,382.2" fill="#05080a" stroke="#0b1a25" stroke-width="0.3" stroke-linejoin="round"/><ellipse cx="1672.6" cy="352.2" rx="2.6" ry="3.2" fill="#0c1a24" transform="rotate(25 1672.6 352.2)"/><ellipse cx="1601.6" cy="400.2" rx="2.4" ry="3.2" fill="#0c1a24" transform="rotate(25 1601.6 400.2)"/><polygon points="1097.2,515.9 1177.7,567.4 1206.7,583.5 1239.7,606.8 1260.7,592.4 1272.7,599.6 1243.8,618.1 1201.9,599.6 1169.7,573.8" fill="#000" opacity="0.28" filter="url(#b5)"/><polygon points="1081.1,462.4 1103.3,451.1 1103.7,473.2 1084.6,464.3" fill="#21394b" stroke="#0b1a25" stroke-width="0.95" stroke-linejoin="round"/><polygon points="1078.7,467.5 1081.1,462.4 1218.0,548.1 1215.6,552.1 1243.0,565.0 1239.7,606.8 1205.1,581.9 1183.4,569.3 1181.8,573.0 1176.1,570.6 1176.1,565.0 1132.6,537.6 1132.6,540.8 1127.0,538.4 1127.0,532.8 1097.2,513.4 1097.2,516.7 1091.6,515.9 1090.8,511.8 1085.9,509.4 1085.1,511.8 1074.7,504.9 1076.3,482.8" fill="#3a7099" stroke="#0b1a25" stroke-width="0.95" stroke-linejoin="round"/><polygon points="1081.1,462.4 1084.6,464.0 1103.7,473.2 1218.8,546.1 1218.0,548.4" fill="#63c5ff" stroke="#0b1a25" stroke-width="0.5" stroke-linejoin="round"/><polyline points="1078.7,467.5 1216.1,551.9" fill="none" stroke="#0b1a25" stroke-width="0.6" stroke-linejoin="round" stroke-linecap="round"/><polyline points="1082.7,472.7 1214.0,556.1" fill="none" stroke="#0b1a25" stroke-width="0.6" stroke-linejoin="round" stroke-linecap="round"/><polyline points="1076.3,482.8 1184.2,550.0 1210.7,566.9" fill="none" stroke="#0b1a25" stroke-width="0.7" stroke-linejoin="round" stroke-linecap="round"/><polyline points="1078.2,485.3 1183.4,552.1" fill="none" stroke="#0b1a25" stroke-width="0.5" stroke-linejoin="round" stroke-linecap="round"/><polyline points="1097.2,513.4 1098.0,509.4 1127.0,528.7 1127.0,532.8" fill="none" stroke="#0b1a25" stroke-width="0.5" stroke-linejoin="round" stroke-linecap="round"/><polygon points="1216.1,551.3 1219.9,547.7 1244.1,562.2 1264.7,550.5 1266.3,551.0 1243.0,565.0" fill="#63c5ff" stroke="#0b1a25" stroke-width="0.6" stroke-linejoin="round"/><polygon points="1243.0,565.0 1266.3,551.0 1260.7,592.4 1239.7,606.8" fill="#21394b" stroke="#0b1a25" stroke-width="0.95" stroke-linejoin="round"/><polygon points="1216.4,556.1 1239.7,568.2 1235.7,589.1 1212.4,573.8" fill="#3a7099" stroke="#0b1a25" stroke-width="0.6" stroke-linejoin="round"/><polyline points="1207.5,569.0 1238.1,589.9 1237.3,604.4" fill="none" stroke="#0b1a25" stroke-width="0.6" stroke-linejoin="round" stroke-linecap="round"/><polyline points="1185.8,556.4 1183.4,572.2" fill="none" stroke="#0b1a25" stroke-width="0.6" stroke-linejoin="round" stroke-linecap="round"/><circle cx="1089.6" cy="500.6" r="0.8" fill="#0b1a25"/><circle cx="1152.4" cy="540.3" r="0.8" fill="#0b1a25"/><circle cx="1221.2" cy="584.8" r="0.8" fill="#0b1a25"/><circle cx="1255.0" cy="590.7" r="0.8" fill="#0b1a25"/><polygon points="1004.4,546.6 1065.6,586.2 1108.8,621.3 1172.6,661.7 1183.4,655.4 1193.3,659.9 1173.5,670.0 1105.2,629.4 1062.0,591.6" fill="#000" opacity="0.28" filter="url(#b4)"/><polygon points="1175.3,612.8 1187.9,604.2 1183.4,655.4 1172.6,661.7" fill="#21394b" stroke="#0b1a25" stroke-width="0.95" stroke-linejoin="round"/><polygon points="1003.5,538.5 1065.6,578.1 1065.6,586.2 1062.0,585.3 1004.4,546.6" fill="#3a7099" stroke="#0b1a25" stroke-width="0.95" stroke-linejoin="round"/><polygon points="1107.9,610.5 1172.6,650.1 1172.6,661.7 1108.8,621.3" fill="#3a7099" stroke="#0b1a25" stroke-width="0.95" stroke-linejoin="round"/><polygon points="998.5,521.7 1067.0,564.6 1139.7,614.1 1140.8,591.9 1175.3,612.8 1173.2,650.6 1107.9,611.4 1065.6,578.6 998.1,534.0" fill="#3a7099" stroke="#0b1a25" stroke-width="0.95" stroke-linejoin="round"/><polygon points="1003.5,497.8 1016.1,508.4 1015.9,520.3 1010.2,518.0 1002.8,519.2" fill="#21394b" stroke="#0b1a25" stroke-width="0.5" stroke-linejoin="round"/><polygon points="999.0,499.8 1003.1,497.8 1002.6,521.0 998.5,521.7" fill="#3a7099" stroke="#0b1a25" stroke-width="0.6" stroke-linejoin="round"/><polygon points="1002.8,519.2 1010.2,518.0 1015.9,520.3 1067.4,553.8 1067.0,564.6 999.0,521.7" fill="#63c5ff" stroke="#0b1a25" stroke-width="0.6" stroke-linejoin="round"/><polygon points="1074.6,566.7 1078.5,561.9 1140.8,604.2 1139.7,614.1" fill="#63c5ff" stroke="#0b1a25" stroke-width="0.6" stroke-linejoin="round"/><polygon points="1071.3,544.8 1078.2,548.4 1078.2,563.7 1071.0,567.5" fill="#21394b" stroke="#0b1a25" stroke-width="0.6" stroke-linejoin="round"/><polygon points="1067.4,546.2 1071.3,544.8 1071.0,567.5 1067.4,565.5" fill="#3a7099" stroke="#0b1a25" stroke-width="0.6" stroke-linejoin="round"/><polygon points="1068.5,543.7 1074.0,541.9 1078.5,548.4 1071.3,545.0" fill="#63c5ff" stroke="#0b1a25" stroke-width="0.5" stroke-linejoin="round"/><polyline points="1016.1,508.8 1068.5,544.4" fill="none" stroke="#0b1a25" stroke-width="2.2" stroke-linejoin="round" stroke-linecap="round"/><polyline points="1078.5,550.9 1142.6,592.3" fill="none" stroke="#0b1a25" stroke-width="2.2" stroke-linejoin="round" stroke-linecap="round"/><polygon points="999.0,499.4 1014.3,489.0 1187.9,604.2 1175.3,612.8" fill="#63c5ff" stroke="#0b1a25" stroke-width="0.95" stroke-linejoin="round"/><polyline points="998.6,522.3 1004.4,524.1 1066.5,565.5 1139.7,614.6 1173.5,634.8" fill="none" stroke="#0b1a25" stroke-width="0.6" stroke-linejoin="round" stroke-linecap="round"/><polyline points="1003.5,538.5 1065.6,578.6" fill="none" stroke="#0b1a25" stroke-width="0.5" stroke-linejoin="round" stroke-linecap="round"/><polygon points="1144.4,597.9 1173.5,617.1 1170.5,636.9 1143.0,617.7" fill="#1d3447" stroke="#0b1a25" stroke-width="0.5" stroke-linejoin="round"/><polygon points="1143.0,622.5 1169.9,639.3 1169.0,646.5 1142.6,629.7" fill="#1d3447" stroke="#0b1a25" stroke-width="0.5" stroke-linejoin="round"/><polyline points="1144.2,600.1 1173.2,619.3" fill="none" stroke="#4a86b3" stroke-width="0.4" stroke-linejoin="round" stroke-linecap="round"/><polyline points="1144.1,602.3 1172.9,621.5" fill="none" stroke="#4a86b3" stroke-width="0.4" stroke-linejoin="round" stroke-linecap="round"/><polyline points="1143.9,604.5 1172.5,623.7" fill="none" stroke="#4a86b3" stroke-width="0.4" stroke-linejoin="round" stroke-linecap="round"/><polyline points="1143.8,606.7 1172.2,625.9" fill="none" stroke="#4a86b3" stroke-width="0.4" stroke-linejoin="round" stroke-linecap="round"/><polyline points="1143.6,608.9 1171.8,628.1" fill="none" stroke="#4a86b3" stroke-width="0.4" stroke-linejoin="round" stroke-linecap="round"/><polyline points="1143.4,611.1 1171.5,630.3" fill="none" stroke="#4a86b3" stroke-width="0.4" stroke-linejoin="round" stroke-linecap="round"/><polyline points="1143.3,613.3 1171.2,632.5" fill="none" stroke="#4a86b3" stroke-width="0.4" stroke-linejoin="round" stroke-linecap="round"/><polyline points="1143.1,615.5 1170.8,634.7" fill="none" stroke="#4a86b3" stroke-width="0.4" stroke-linejoin="round" stroke-linecap="round"/><polyline points="1146.8,599.5 1145.3,619.3" fill="none" stroke="#4a86b3" stroke-width="0.4" stroke-linejoin="round" stroke-linecap="round"/><polyline points="1149.3,601.1 1147.5,620.9" fill="none" stroke="#4a86b3" stroke-width="0.4" stroke-linejoin="round" stroke-linecap="round"/><polyline points="1151.7,602.7 1149.8,622.5" fill="none" stroke="#4a86b3" stroke-width="0.4" stroke-linejoin="round" stroke-linecap="round"/><polyline points="1154.1,604.3 1152.1,624.1" fill="none" stroke="#4a86b3" stroke-width="0.4" stroke-linejoin="round" stroke-linecap="round"/><polyline points="1156.5,605.9 1154.4,625.7" fill="none" stroke="#4a86b3" stroke-width="0.4" stroke-linejoin="round" stroke-linecap="round"/><polyline points="1159.0,607.5 1156.7,627.3" fill="none" stroke="#4a86b3" stroke-width="0.4" stroke-linejoin="round" stroke-linecap="round"/><polyline points="1161.4,609.1 1159.0,628.9" fill="none" stroke="#4a86b3" stroke-width="0.4" stroke-linejoin="round" stroke-linecap="round"/><polyline points="1163.8,610.7 1161.3,630.5" fill="none" stroke="#4a86b3" stroke-width="0.4" stroke-linejoin="round" stroke-linecap="round"/><polyline points="1166.3,612.3 1163.6,632.1" fill="none" stroke="#4a86b3" stroke-width="0.4" stroke-linejoin="round" stroke-linecap="round"/><polyline points="1168.7,613.9 1165.9,633.7" fill="none" stroke="#4a86b3" stroke-width="0.4" stroke-linejoin="round" stroke-linecap="round"/><polyline points="1171.1,615.5 1168.2,635.3" fill="none" stroke="#4a86b3" stroke-width="0.4" stroke-linejoin="round" stroke-linecap="round"/><polygon points="1007.1,542.1 1022.4,552.0 1022.0,554.7 1007.1,545.1" fill="#3b78a6" stroke="#0b1a25" stroke-width="0.6" stroke-linejoin="round"/><polygon points="1031.0,559.2 1038.9,564.2 1038.6,567.3 1031.0,562.2" fill="#3b78a6" stroke="#0b1a25" stroke-width="0.6" stroke-linejoin="round"/><polygon points="1045.4,569.1 1056.6,576.3 1056.2,579.3 1045.4,572.1" fill="#3b78a6" stroke="#0b1a25" stroke-width="0.6" stroke-linejoin="round"/><polygon points="1115.1,618.6 1139.4,633.0 1139.0,636.2 1115.1,621.8" fill="#3b78a6" stroke="#0b1a25" stroke-width="0.6" stroke-linejoin="round"/><polygon points="1153.8,642.9 1163.7,649.2 1163.3,652.4 1153.8,645.9" fill="#3b78a6" stroke="#0b1a25" stroke-width="0.6" stroke-linejoin="round"/><circle cx="1116.5" cy="607.4" r="0.8" fill="#0b1a25"/><circle cx="1129.5" cy="615.3" r="0.8" fill="#0b1a25"/><polygon points="825.9,498.4 877.6,534.1 885.6,554.0 857.8,558.0 822.0,522.2" fill="#000" opacity="0.13" filter="url(#b6)"/><polygon points="826.7,462.6 885.6,504.3 885.6,525.4 827.9,485.6" fill="#3a7099" stroke="#0b1a25" stroke-width="0.95" stroke-linejoin="round"/><polygon points="885.6,504.3 896.3,498.4 896.3,518.2 885.6,525.4" fill="#21394b" stroke="#0b1a25" stroke-width="0.95" stroke-linejoin="round"/><polygon points="826.7,462.6 837.9,457.4 896.3,498.4 885.6,504.3" fill="#63c5ff" stroke="#0b1a25" stroke-width="0.95" stroke-linejoin="round"/><polygon points="639.1,465.3 653.8,457.8 669.7,468.9 653.4,478.5" fill="#000" opacity="0.2" filter="url(#b2)"/><polygon points="639.1,465.3 651.0,474.5 651.0,476.5 639.1,467.3" fill="#3a7099" stroke="#0b1a25" stroke-width="0.6" stroke-linejoin="round"/><polygon points="651.0,474.5 665.7,466.5 665.7,468.5 651.0,476.5" fill="#21394b" stroke="#0b1a25" stroke-width="0.6" stroke-linejoin="round"/><polygon points="639.1,465.3 653.8,457.8 665.7,466.5 651.0,474.5" fill="#63c5ff" stroke="#0b1a25" stroke-width="0.7" stroke-linejoin="round"/><polygon points="757.6,561.2 773.5,552.8 790.2,564.4 772.7,574.7" fill="#000" opacity="0.2" filter="url(#b2)"/><polygon points="757.6,561.2 770.3,570.7 770.3,572.7 757.6,563.2" fill="#3a7099" stroke="#0b1a25" stroke-width="0.6" stroke-linejoin="round"/><polygon points="770.3,570.7 786.2,562.0 786.2,564.0 770.3,572.7" fill="#21394b" stroke="#0b1a25" stroke-width="0.6" stroke-linejoin="round"/><polygon points="757.6,561.2 773.5,552.8 786.2,562.0 770.3,570.7" fill="#63c5ff" stroke="#0b1a25" stroke-width="0.7" stroke-linejoin="round"/><polygon points="934.1,561.9 998.0,608.8 1069.7,659.2 1083.2,652.8 1088.9,661.4 1070.5,668.5 999.4,615.9" fill="#000" opacity="0.25" filter="url(#b5)"/><polygon points="998.4,585.7 1008.7,578.6 1008.0,599.6 996.6,607.4" fill="#21394b" stroke="#0b1a25" stroke-width="0.95" stroke-linejoin="round"/><polygon points="931.5,539.2 998.4,585.7 996.6,607.4 931.2,559.8" fill="#3a7099" stroke="#0b1a25" stroke-width="0.95" stroke-linejoin="round"/><polygon points="932.0,538.5 943.3,532.1 1008.7,578.6 998.4,585.7" fill="#63c5ff" stroke="#0b1a25" stroke-width="0.95" stroke-linejoin="round"/><polyline points="931.5,547.3 997.6,594.2" fill="none" stroke="#0b1a25" stroke-width="0.7" stroke-linejoin="round" stroke-linecap="round"/><polyline points="931.7,549.1 954.7,565.5" fill="none" stroke="#0b1a25" stroke-width="0.5" stroke-linejoin="round" stroke-linecap="round"/><polygon points="954.7,560.1 977.1,575.7 974.6,585.4 953.3,570.5" fill="#1d3447" stroke="#0b1a25" stroke-width="0.6" stroke-linejoin="round"/><polygon points="958.2,559.8 974.6,570.9 974.0,575.1 957.5,563.8" fill="#152838" stroke="#0b1a25" stroke-width="0.4" stroke-linejoin="round"/><polygon points="955.4,566.9 974.6,580.0 973.9,584.2 954.4,570.9" fill="#3b78a6" stroke="#0b1a25" stroke-width="0.5" stroke-linejoin="round"/><polygon points="936.6,545.3 942.2,549.1 941.9,551.6 936.5,547.9" fill="#3a7099" stroke="#0b1a25" stroke-width="0.5" stroke-linejoin="round"/><polyline points="974.6,585.4 994.5,598.9" fill="none" stroke="#0b1a25" stroke-width="0.5" stroke-linejoin="round" stroke-linecap="round"/><circle cx="977.7" cy="575.1" r="1.3" fill="none" stroke="#0b1a25" stroke-width="0.5"/><polygon points="1071.6,638.2 1082.6,630.6 1081.8,653.2 1069.6,661.6" fill="#21394b" stroke="#0b1a25" stroke-width="0.95" stroke-linejoin="round"/><polygon points="999.7,588.3 1071.6,638.2 1069.6,661.6 999.4,610.4" fill="#3a7099" stroke="#0b1a25" stroke-width="0.95" stroke-linejoin="round"/><polygon points="1000.1,587.5 1012.4,580.6 1082.6,630.6 1071.6,638.2" fill="#63c5ff" stroke="#0b1a25" stroke-width="0.95" stroke-linejoin="round"/><polyline points="999.7,597.0 1070.7,647.4" fill="none" stroke="#0b1a25" stroke-width="0.7" stroke-linejoin="round" stroke-linecap="round"/><polyline points="999.8,599.0 1024.6,616.5" fill="none" stroke="#0b1a25" stroke-width="0.5" stroke-linejoin="round" stroke-linecap="round"/><polygon points="1024.6,610.7 1048.7,627.5 1046.0,637.9 1023.0,621.9" fill="#1d3447" stroke="#0b1a25" stroke-width="0.6" stroke-linejoin="round"/><polygon points="1028.4,610.4 1046.0,622.3 1045.3,626.9 1027.6,614.7" fill="#152838" stroke="#0b1a25" stroke-width="0.4" stroke-linejoin="round"/><polygon points="1025.3,618.0 1046.0,632.1 1045.2,636.7 1024.3,622.3" fill="#3b78a6" stroke="#0b1a25" stroke-width="0.5" stroke-linejoin="round"/><polygon points="1005.2,594.8 1011.1,599.0 1010.8,601.5 1005.0,597.6" fill="#3a7099" stroke="#0b1a25" stroke-width="0.5" stroke-linejoin="round"/><polyline points="1046.0,637.9 1067.3,652.4" fill="none" stroke="#0b1a25" stroke-width="0.5" stroke-linejoin="round" stroke-linecap="round"/><circle cx="1049.3" cy="626.9" r="1.3" fill="none" stroke="#0b1a25" stroke-width="0.5"/><polygon points="1063.4,644.0 1069.7,648.3 1070.5,645.7 1064.5,641.8" fill="#3b78a6" stroke="#0b1a25" stroke-width="0.5" stroke-linejoin="round"/><polygon points="995.5,615.9 1039.9,647.2 1038.5,659.2 995.9,628.7" fill="#3a7099" stroke="#0b1a25" stroke-width="0.95" stroke-linejoin="round"/><polygon points="995.5,615.9 998.7,614.2 1042.8,645.5 1039.9,647.2" fill="#63c5ff" stroke="#0b1a25" stroke-width="0.6" stroke-linejoin="round"/><polygon points="1039.9,647.2 1042.8,645.5 1041.3,657.1 1038.5,659.2" fill="#21394b" stroke="#0b1a25" stroke-width="0.6" stroke-linejoin="round"/><polygon points="975.9,611.4 981.8,615.9 992.6,608.5 994.0,611.9 995.7,610.5 995.5,607.4 995.5,610.2 981.8,617.9 976.1,614.2" fill="#4f1220" stroke="#0b1a25" stroke-width="0.6" stroke-linejoin="round"/><polygon points="975.9,611.4 988.6,602.8 995.5,607.4 995.2,609.7 992.6,608.5 981.8,615.9" fill="#7d1c30" stroke="#0b1a25" stroke-width="0.6" stroke-linejoin="round"/><polygon points="907.1,561.4 913.1,565.9 923.9,558.5 925.3,561.9 927.0,560.5 926.7,557.4 926.7,560.2 913.1,567.9 907.4,564.2" fill="#4f1220" stroke="#0b1a25" stroke-width="0.6" stroke-linejoin="round"/><polygon points="907.1,561.4 919.9,552.8 926.7,557.4 926.4,559.7 923.9,558.5 913.1,565.9" fill="#7d1c30" stroke="#0b1a25" stroke-width="0.6" stroke-linejoin="round"/><polygon points="965.1,590.9 975.6,597.4 975.6,604.5 972.2,605.7 964.8,600.9" fill="#b8568a" stroke="#0b1a25" stroke-width="0.7" stroke-linejoin="round"/><polygon points="975.6,597.3 978.4,595.3 978.4,603.4 975.6,604.8" fill="#8f3c69" stroke="#0b1a25" stroke-width="0.7" stroke-linejoin="round"/><polygon points="965.3,590.6 968.2,588.9 978.1,595.2 975.6,597.3" fill="#f48cc0" stroke="#0b1a25" stroke-width="0.7" stroke-linejoin="round"/><polyline points="966.2,593.5 973.3,597.7 973.3,600.0" fill="none" stroke="#0b1a25" stroke-width="0.6" stroke-linejoin="round" stroke-linecap="round"/><polygon points="925.0,592.0 933.0,593.8 943.8,604.5 956.8,610.2 947.7,614.8 930.7,604.5" fill="#000" opacity="0.12" filter="url(#b5)"/><polygon points="951.1,586.4 956.8,583.5 961.4,586.4 961.4,591.5 955.7,595.5 951.1,592.6" fill="#3b78a6" stroke="#0b1a25" stroke-width="0.7" stroke-linejoin="round"/><polygon points="932.7,587.2 935.2,585.5 939.8,585.8 947.2,589.2 948.3,593.8 944.9,595.5 946.0,600.0 943.8,602.3 940.9,601.1 933.5,593.2" fill="#3b78a6" stroke="#0b1a25" stroke-width="0.9" stroke-linejoin="round"/><polygon points="934.1,586.6 939.2,586.1 946.9,589.5 948.0,593.5 944.3,594.9 940.6,592.0" fill="#63c5ff" stroke="#0b1a25" stroke-width="0.5" stroke-linejoin="round"/><polygon points="947.7,601.7 956.8,608.5 960.2,606.2 960.2,604.5 956.8,606.5 947.7,600.0" fill="#3b78a6" stroke="#0b1a25" stroke-width="0.7" stroke-linejoin="round"/><polygon points="947.2,597.7 950.0,596.0 960.8,603.4 960.2,604.5 956.8,606.5 947.7,600.0" fill="#63c5ff" stroke="#0b1a25" stroke-width="0.7" stroke-linejoin="round"/><polyline points="948.9,591.8 963.1,584.4" fill="none" stroke="#102a3a" stroke-width="2.6" stroke-linejoin="round" stroke-linecap="round"/><polyline points="948.9,591.8 963.1,584.4" fill="none" stroke="#63c5ff" stroke-width="1.7" stroke-linejoin="round" stroke-linecap="round"/><polygon points="1024.4,642.0 1030.1,639.2 1034.7,642.0 1034.7,647.2 1029.0,651.1 1024.4,648.3" fill="#3b78a6" stroke="#0b1a25" stroke-width="0.7" stroke-linejoin="round"/><polygon points="1006.0,642.9 1008.5,641.2 1013.1,641.5 1020.5,644.9 1021.6,649.4 1018.2,651.1 1019.3,655.7 1017.0,658.0 1014.2,656.8 1006.8,648.9" fill="#3b78a6" stroke="#0b1a25" stroke-width="0.9" stroke-linejoin="round"/><polygon points="1007.4,642.3 1012.5,641.8 1020.2,645.2 1021.3,649.1 1017.6,650.6 1013.9,647.7" fill="#63c5ff" stroke="#0b1a25" stroke-width="0.5" stroke-linejoin="round"/><polygon points="1021.0,657.4 1030.1,664.2 1033.5,661.9 1033.5,660.2 1030.1,662.2 1021.0,655.7" fill="#3b78a6" stroke="#0b1a25" stroke-width="0.7" stroke-linejoin="round"/><polygon points="1020.5,653.4 1023.3,651.7 1034.1,659.1 1033.5,660.2 1030.1,662.2 1021.0,655.7" fill="#63c5ff" stroke="#0b1a25" stroke-width="0.7" stroke-linejoin="round"/><polyline points="1022.2,647.4 1036.4,640.1" fill="none" stroke="#102a3a" stroke-width="2.6" stroke-linejoin="round" stroke-linecap="round"/><polyline points="1022.2,647.4 1036.4,640.1" fill="none" stroke="#63c5ff" stroke-width="1.7" stroke-linejoin="round" stroke-linecap="round"/><polygon points="1061.2,661.4 1064.8,659.9 1073.3,665.6 1073.6,668.8 1069.0,669.9 1061.9,666.3" fill="#3b78a6" stroke="#0b1a25" stroke-width="0.7" stroke-linejoin="round"/><polygon points="1061.9,661.1 1064.8,659.9 1072.6,665.3 1069.0,666.3" fill="#63c5ff" stroke="#0b1a25" stroke-width="0.5" stroke-linejoin="round"/><polygon points="1052.7,658.5 1056.2,656.4 1059.8,658.5 1056.2,661.1" fill="#63c5ff" stroke="#0b1a25" stroke-width="0.6" stroke-linejoin="round"/><polygon points="1044.2,650.0 1049.1,647.4 1052.0,649.7 1047.0,652.6" fill="#63c5ff" stroke="#0b1a25" stroke-width="0.6" stroke-linejoin="round"/><circle cx="1047.0" cy="655.0" r="1.0" fill="#0b1a25"/><circle cx="1054.1" cy="659.9" r="1.0" fill="#0b1a25"/><circle cx="1074.0" cy="659.2" r="0.8" fill="#0b1a25"/><polygon points="900.8,593.8 942.5,591.7 948.8,612.5 907.1,618.8" fill="#000" opacity="0.07" filter="url(#b6)"/><polygon points="948.8,629.2 980.0,627.1 984.2,645.8 950.8,650.0" fill="#000" opacity="0.07" filter="url(#b6)"/><polygon points="1005.0,685.4 1038.3,683.3 1040.4,700.0 1007.1,704.2" fill="#000" opacity="0.09" filter="url(#b6)"/><polygon points="1052.9,672.9 1088.3,662.5 1094.6,679.2 1063.3,687.5" fill="#000" opacity="0.1" filter="url(#b6)"/><polygon points="1085.8,690.6 1096.7,697.9 1109.2,700.0 1107.1,691.7" fill="#000" opacity="0.15" filter="url(#b3)"/><polygon points="1086.2,681.2 1096.7,687.5 1096.7,697.9 1085.8,690.6" fill="#6db04f" stroke="#0b1a25" stroke-width="0.6" stroke-linejoin="round"/><polygon points="1096.7,687.5 1102.5,684.4 1101.9,695.8 1096.7,697.9" fill="#4c8537" stroke="#0b1a25" stroke-width="0.6" stroke-linejoin="round"/><polygon points="1086.2,681.2 1091.5,677.5 1102.5,684.4 1096.7,687.5" fill="#93d46e" stroke="#0b1a25" stroke-width="0.6" stroke-linejoin="round"/><defs><linearGradient id="t2g" gradientUnits="userSpaceOnUse" x1="700" y1="900" x2="1000" y2="650"><stop offset="0" stop-color="#67ccfe"/><stop offset="0.5" stop-color="#72d6ff"/><stop offset="1" stop-color="#68cdff"/></linearGradient></defs><polygon points="812.3,634.8 1015.7,801.8 1064.5,764.0 1074.4,770.0 1018.7,811.7 808.0,640.7" fill="#000" opacity="0.25" filter="url(#b4)"/><polygon points="812.3,632.8 1015.7,799.8 1015.1,803.8 811.9,636.4" fill="#3b78a6" stroke="#0b1a25" stroke-width="0.5" stroke-linejoin="round"/><polygon points="1015.7,799.8 1063.5,762.4 1063.5,766.0 1015.1,803.8" fill="#21394b" stroke="#0b1a25" stroke-width="0.5" stroke-linejoin="round"/><polygon points="812.3,632.8 858.7,603.9 863.2,603.4 1062.5,759.0 1063.5,763.0 1015.7,799.8" fill="url(#t2g)" stroke="#0b1a25" stroke-width="0.95" stroke-linejoin="round"/><polyline points="815.9,631.2 1017.7,796.8" fill="none" stroke="#0b1a25" stroke-width="0.5" stroke-linejoin="round" stroke-linecap="round"/><polyline points="826.8,620.8 830.2,626.8 857.7,610.5 1051.5,763.0 1025.1,782.9 1028.7,788.9" fill="none" stroke="#0b1a25" stroke-width="2.0" stroke-linejoin="round" stroke-linecap="round"/><circle cx="859.1" cy="616.5" r="1.5" fill="#0b1a25"/><circle cx="941.6" cy="682.1" r="1.5" fill="#0b1a25"/><circle cx="1042.6" cy="762.4" r="1.5" fill="#0b1a25"/><polygon points="731.5,679.6 929.7,857.1 997.2,811.4 1008.0,815.7 931.8,868.0 727.2,685.1" fill="#000" opacity="0.25" filter="url(#b4)"/><polygon points="790.3,651.3 978.7,813.5 992.8,804.8 1005.9,787.4 921.0,717.7 816.4,648.1" fill="#000" opacity="0.13" filter="url(#b6)"/><polygon points="731.5,677.5 926.4,852.7 930.8,854.5 930.8,857.5 925.3,856.0 731.5,680.3" fill="#3b78a6" stroke="#0b1a25" stroke-width="0.5" stroke-linejoin="round"/><polygon points="930.8,854.5 997.2,808.1 997.2,810.9 930.8,857.5" fill="#21394b" stroke="#0b1a25" stroke-width="0.5" stroke-linejoin="round"/><polygon points="731.5,676.8 734.8,674.2 795.8,640.4 800.1,644.1 789.9,650.7 978.7,813.1 992.8,803.7 997.2,808.1 985.2,817.9 930.8,854.5 926.4,852.7" fill="url(#t2g)" stroke="#0b1a25" stroke-width="0.95" stroke-linejoin="round"/><polyline points="789.2,650.7 745.7,673.8" fill="none" stroke="#0b1a25" stroke-width="2.0" stroke-linejoin="round" stroke-linecap="round"/><polyline points="745.7,673.8 935.1,840.8 977.6,813.5" fill="none" stroke="#0b1a25" stroke-width="1.1" stroke-linejoin="round" stroke-linecap="round"/><polyline points="735.5,676.8 929.7,850.6" fill="none" stroke="#0b1a25" stroke-width="0.5" stroke-linejoin="round" stroke-linecap="round"/><circle cx="758.1" cy="675.3" r="1.5" fill="#0b1a25"/><circle cx="858.9" cy="763.9" r="1.5" fill="#0b1a25"/><circle cx="941.2" cy="836.4" r="1.5" fill="#0b1a25"/><circle cx="892.7" cy="729.5" r="7" fill="none" stroke="#8fa9bf" stroke-width="4" opacity="0.75"/><polygon points="641.6,719.1 671.8,712.1 856.2,887.3 834.1,903.5 845.7,911.6 901.4,872.2 908.4,879.1 845.7,918.6 827.2,904.7 845.7,888.4 669.4,719.1 648.6,727.2" fill="#000" opacity="0.25" filter="url(#b4)"/><polygon points="769.2,839.7 798.2,867.5 822.5,855.9 827.2,860.6 797.0,874.5 764.5,844.3" fill="#000" opacity="0.2" filter="url(#b3)"/><polygon points="900.3,863.6 901.4,870.3 846.9,909.3 843.4,905.8 885.2,873.6" fill="#21394b" stroke="#0b1a25" stroke-width="0.6" stroke-linejoin="round"/><polygon points="647.4,722.6 671.8,709.8 672.9,713.3 654.4,723.7" fill="#21394b" stroke="#0b1a25" stroke-width="0.5" stroke-linejoin="round"/><path d="M641.6 716.3 L688.0 691.7 L699.6 683.8 L703.8 683.1 L899.1 861.7 L900.5 863.8 L885.2 873.6 L843.4 905.8 L834.1 901.2 L856.2 884.9 L820.2 851.3 L798.2 865.7 L770.3 837.9 L791.2 826.9 L671.8 709.8 L647.4 722.6Z M677.6 704.7 L688.0 699.4 L693.1 703.3 L682.9 708.9Z M683.8 711.2 L692.6 707.0 L699.1 712.6 L690.3 717.2Z M700.8 724.2 L706.1 721.4 L754.1 765.0 L748.8 767.8Z M752.9 771.7 L758.3 769.0 L807.5 816.0 L802.1 818.8Z M807.5 823.9 L814.4 820.5 L830.7 835.5 L823.7 839.7Z M787.7 837.4 L798.2 832.3 L813.3 847.8 L802.8 853.6Z " fill="url(#t2g)" fill-rule="evenodd" stroke="#0b1a25" stroke-width="0.8" stroke-linejoin="round"/><polygon points="700.8,724.2 706.1,721.4 754.1,765.0 748.8,767.8" fill="#000" opacity="0.13"/><polygon points="752.9,771.7 758.3,769.0 807.5,816.0 802.1,818.8" fill="#000" opacity="0.13"/><polygon points="807.5,823.9 814.4,820.5 830.7,835.5 823.7,839.7" fill="#000" opacity="0.13"/><polygon points="677.6,704.7 688.0,699.4 693.1,703.3 682.9,708.9" fill="#23485f" opacity="0.85"/><polygon points="683.8,711.2 692.6,707.0 699.1,712.6 690.3,717.2" fill="#23485f" opacity="0.85"/><polyline points="700.8,724.2 706.1,721.4 754.1,765.0" fill="none" stroke="#0f2433" stroke-width="1.6" stroke-linejoin="round" stroke-linecap="round"/><polyline points="752.9,771.7 758.3,769.0 807.5,816.0" fill="none" stroke="#0f2433" stroke-width="1.6" stroke-linejoin="round" stroke-linecap="round"/><polyline points="807.5,823.9 814.4,820.5 830.7,835.5" fill="none" stroke="#0f2433" stroke-width="1.6" stroke-linejoin="round" stroke-linecap="round"/><polyline points="706.6,702.8 719.3,697.0 831.8,801.4 817.9,808.4 706.6,702.8" fill="none" stroke="#0b1a25" stroke-width="0.7" stroke-linejoin="round" stroke-linecap="round"/><polyline points="688.0,691.7 885.2,876.4" fill="none" stroke="#0b1a25" stroke-width="0.6" stroke-linejoin="round" stroke-linecap="round"/><polyline points="692.6,689.4 889.8,873.3" fill="none" stroke="#0b1a25" stroke-width="0.5" stroke-linejoin="round" stroke-linecap="round"/><polyline points="699.6,697.0 864.3,851.3" fill="none" stroke="#0b1a25" stroke-width="0.6" stroke-linejoin="round" stroke-linecap="round"/><polyline points="697.3,700.5 829.5,825.8" fill="none" stroke="#0b1a25" stroke-width="0.5" stroke-linejoin="round" stroke-linecap="round"/><polyline points="675.2,707.5 852.7,881.5" fill="none" stroke="#0b1a25" stroke-width="0.5" stroke-linejoin="round" stroke-linecap="round"/><polygon points="552.4,771.8 742.0,978.6 810.9,936.7 818.3,944.1 746.9,986.0 547.5,779.2" fill="#000" opacity="0.28" filter="url(#b4)"/><polygon points="594.2,777.2 673.0,859.9 727.2,915.1 760.4,950.8 764.9,947.8 679.2,855.0 598.7,772.3" fill="#000" opacity="0.22" filter="url(#b3)"/><polygon points="709.5,877.6 734.6,906.0 772.7,886.3 776.4,891.2 734.6,914.6 705.0,882.6" fill="#000" opacity="0.18" filter="url(#b3)"/><polygon points="554.8,767.3 744.4,971.2 749.8,976.1 744.4,976.6 555.3,773.7" fill="#3b78a6" stroke="#0b1a25" stroke-width="0.5" stroke-linejoin="round"/><polygon points="809.7,929.8 809.2,936.0 750.6,976.1 744.4,974.1 751.3,969.2 764.6,956.4" fill="#21394b" stroke="#0b1a25" stroke-width="0.6" stroke-linejoin="round"/><polygon points="589.8,771.3 599.7,765.9 599.7,768.6 595.5,771.8 595.5,774.2 591.8,775.7" fill="#21394b" stroke="#0b1a25" stroke-width="0.5" stroke-linejoin="round"/><polygon points="590.8,755.3 619.4,740.0 619.4,743.5 593.5,758.0" fill="#21394b" stroke="#0b1a25" stroke-width="0.5" stroke-linejoin="round"/><path d="M554.8 767.3 L559.8 761.9 L606.5 736.1 L612.7 733.6 L618.9 737.3 L619.4 740.0 L590.8 755.3 L599.7 765.9 L589.8 771.3 L594.2 775.5 L673.0 857.9 L684.1 851.8 L709.5 875.7 L743.9 855.5 L771.5 883.8 L727.2 913.3 L760.4 949.0 L796.1 926.9 L803.5 924.4 L809.7 929.8 L764.6 956.4 L751.3 969.2 L744.9 974.1Z M711.2 878.9 L722.8 872.7 L732.6 882.1 L742.0 875.7 L751.3 884.5 L740.0 890.4 L744.9 897.8 L734.1 903.5Z " fill="url(#t2g)" fill-rule="evenodd" stroke="#0b1a25" stroke-width="0.8" stroke-linejoin="round"/><polyline points="572.6,755.8 577.3,760.0 588.6,755.3" fill="none" stroke="#0b1a25" stroke-width="0.6" stroke-linejoin="round" stroke-linecap="round"/><polyline points="577.3,760.0 589.8,771.3" fill="none" stroke="#0b1a25" stroke-width="0.6" stroke-linejoin="round" stroke-linecap="round"/><polyline points="606.5,736.1 611.0,741.0 618.9,737.3" fill="none" stroke="#0b1a25" stroke-width="0.6" stroke-linejoin="round" stroke-linecap="round"/><polyline points="796.1,926.9 801.0,933.0 809.7,929.8" fill="none" stroke="#0b1a25" stroke-width="0.6" stroke-linejoin="round" stroke-linecap="round"/><polyline points="673.0,857.9 726.0,913.3" fill="none" stroke="#0b1a25" stroke-width="0.6" stroke-linejoin="round" stroke-linecap="round"/><polyline points="684.1,851.8 734.6,902.8" fill="none" stroke="#0b1a25" stroke-width="0.6" stroke-linejoin="round" stroke-linecap="round"/><polyline points="732.1,864.1 761.7,889.5" fill="none" stroke="#0b1a25" stroke-width="0.6" stroke-linejoin="round" stroke-linecap="round"/><polyline points="760.4,949.0 765.3,955.2" fill="none" stroke="#0b1a25" stroke-width="0.6" stroke-linejoin="round" stroke-linecap="round"/><polygon points="416.8,557.3 482.8,626.9 494.9,623.7 524.8,653.7 514.7,661.8 552.2,700.1 608.6,673.3 539.3,700.5 499.9,657.4 407.6,560.2" fill="#000" opacity="0.2" filter="url(#b4)"/><polygon points="422.6,553.9 488.2,620.2 488.2,624.6 422.6,558.4" fill="#3a7cab" stroke="#0b1a25" stroke-width="0.7" stroke-linejoin="round"/><polygon points="497.5,615.1 531.4,648.9 531.4,653.9 497.5,620.1" fill="#3a7cab" stroke="#0b1a25" stroke-width="0.7" stroke-linejoin="round"/><polygon points="522.0,654.3 555.1,687.8 555.1,692.2 522.0,658.7" fill="#3a7cab" stroke="#0b1a25" stroke-width="0.7" stroke-linejoin="round"/><polygon points="531.4,648.9 522.0,654.3 522.0,658.7 531.4,653.9" fill="#1f4057" stroke="#0b1a25" stroke-width="0.7" stroke-linejoin="round"/><polygon points="555.1,687.8 632.9,642.3 632.9,651.1 555.1,692.2" fill="#1f4057" stroke="#0b1a25" stroke-width="0.7" stroke-linejoin="round"/><polygon points="558.6,686.9 613.0,657.0 613.0,658.9 558.6,688.8" fill="#0f2231" stroke="#0b1a25" stroke-width="0.3" stroke-linejoin="round"/><polygon points="422.6,553.9 488.2,620.2 497.5,615.1 531.4,648.9 522.0,654.3 555.1,687.8 632.9,642.3 497.0,515.5" fill="#63c5ff" stroke="#0b1a25" stroke-width="0.8" stroke-linejoin="round"/><polyline points="425.6,553.7 489.2,617.8" fill="none" stroke="#0b1a25" stroke-width="0.5"/><polygon points="487.5,520.5 493.3,525.9 494.0,518.4 489.9,514.5" fill="#3a7cab" stroke="#0b1a25" stroke-width="0.7" stroke-linejoin="round"/><polygon points="493.3,525.9 501.4,521.4 499.0,515.2 494.0,518.4" fill="#1f4057" stroke="#0b1a25" stroke-width="0.7" stroke-linejoin="round"/><polygon points="489.9,514.5 494.0,518.4 499.0,515.2 494.9,511.3" fill="#63c5ff" stroke="#0b1a25" stroke-width="0.7" stroke-linejoin="round"/><polygon points="494.1,526.7 500.0,532.2 500.7,524.6 496.5,520.7" fill="#3a7cab" stroke="#0b1a25" stroke-width="0.7" stroke-linejoin="round"/><polygon points="500.0,532.2 508.0,527.6 505.7,521.4 500.7,524.6" fill="#1f4057" stroke="#0b1a25" stroke-width="0.7" stroke-linejoin="round"/><polygon points="496.5,520.7 500.7,524.6 505.7,521.4 501.5,517.5" fill="#63c5ff" stroke="#0b1a25" stroke-width="0.7" stroke-linejoin="round"/><polygon points="500.8,533.0 506.7,538.6 507.4,531.0 503.2,527.0" fill="#3a7cab" stroke="#0b1a25" stroke-width="0.7" stroke-linejoin="round"/><polygon points="506.7,538.6 514.8,533.9 512.4,527.7 507.4,531.0" fill="#1f4057" stroke="#0b1a25" stroke-width="0.7" stroke-linejoin="round"/><polygon points="503.2,527.0 507.4,531.0 512.4,527.7 508.2,523.8" fill="#63c5ff" stroke="#0b1a25" stroke-width="0.7" stroke-linejoin="round"/><polygon points="507.5,539.3 513.5,545.0 514.2,537.4 509.9,533.4" fill="#3a7cab" stroke="#0b1a25" stroke-width="0.7" stroke-linejoin="round"/><polygon points="513.5,545.0 521.6,540.3 519.2,534.1 514.2,537.4" fill="#1f4057" stroke="#0b1a25" stroke-width="0.7" stroke-linejoin="round"/><polygon points="509.9,533.4 514.2,537.4 519.2,534.1 514.9,530.1" fill="#63c5ff" stroke="#0b1a25" stroke-width="0.7" stroke-linejoin="round"/><polygon points="514.3,545.8 520.3,551.5 521.0,543.8 516.7,539.8" fill="#3a7cab" stroke="#0b1a25" stroke-width="0.7" stroke-linejoin="round"/><polygon points="520.3,551.5 528.4,546.7 526.1,540.5 521.0,543.8" fill="#1f4057" stroke="#0b1a25" stroke-width="0.7" stroke-linejoin="round"/><polygon points="516.7,539.8 521.0,543.8 526.1,540.5 521.7,536.5" fill="#63c5ff" stroke="#0b1a25" stroke-width="0.7" stroke-linejoin="round"/><polygon points="521.2,552.2 527.3,558.0 527.9,550.3 523.6,546.3" fill="#3a7cab" stroke="#0b1a25" stroke-width="0.7" stroke-linejoin="round"/><polygon points="527.3,558.0 535.4,553.2 533.0,547.0 527.9,550.3" fill="#1f4057" stroke="#0b1a25" stroke-width="0.7" stroke-linejoin="round"/><polygon points="523.6,546.3 527.9,550.3 533.0,547.0 528.6,543.0" fill="#63c5ff" stroke="#0b1a25" stroke-width="0.7" stroke-linejoin="round"/><polygon points="528.1,558.8 534.2,564.6 534.9,556.9 530.5,552.8" fill="#3a7cab" stroke="#0b1a25" stroke-width="0.7" stroke-linejoin="round"/><polygon points="534.2,564.6 542.4,559.8 540.0,553.6 534.9,556.9" fill="#1f4057" stroke="#0b1a25" stroke-width="0.7" stroke-linejoin="round"/><polygon points="530.5,552.8 534.9,556.9 540.0,553.6 535.6,549.5" fill="#63c5ff" stroke="#0b1a25" stroke-width="0.7" stroke-linejoin="round"/><polygon points="535.1,565.4 541.3,571.2 541.9,563.6 537.5,559.4" fill="#3a7cab" stroke="#0b1a25" stroke-width="0.7" stroke-linejoin="round"/><polygon points="541.3,571.2 549.5,566.4 547.0,560.2 541.9,563.6" fill="#1f4057" stroke="#0b1a25" stroke-width="0.7" stroke-linejoin="round"/><polygon points="537.5,559.4 541.9,563.6 547.0,560.2 542.6,556.1" fill="#63c5ff" stroke="#0b1a25" stroke-width="0.7" stroke-linejoin="round"/><polygon points="542.2,572.0 548.4,578.0 549.1,570.3 544.6,566.1" fill="#3a7cab" stroke="#0b1a25" stroke-width="0.7" stroke-linejoin="round"/><polygon points="548.4,578.0 556.6,573.1 554.2,566.9 549.1,570.3" fill="#1f4057" stroke="#0b1a25" stroke-width="0.7" stroke-linejoin="round"/><polygon points="544.6,566.1 549.1,570.3 554.2,566.9 549.7,562.7" fill="#63c5ff" stroke="#0b1a25" stroke-width="0.7" stroke-linejoin="round"/><polygon points="549.3,578.8 555.6,584.8 556.2,577.1 551.7,572.8" fill="#3a7cab" stroke="#0b1a25" stroke-width="0.7" stroke-linejoin="round"/><polygon points="555.6,584.8 563.8,579.8 561.3,573.7 556.2,577.1" fill="#1f4057" stroke="#0b1a25" stroke-width="0.7" stroke-linejoin="round"/><polygon points="551.7,572.8 556.2,577.1 561.3,573.7 556.8,569.4" fill="#63c5ff" stroke="#0b1a25" stroke-width="0.7" stroke-linejoin="round"/><polygon points="556.5,585.6 562.9,591.6 563.5,583.9 558.9,579.6" fill="#3a7cab" stroke="#0b1a25" stroke-width="0.7" stroke-linejoin="round"/><polygon points="562.9,591.6 571.1,586.6 568.6,580.5 563.5,583.9" fill="#1f4057" stroke="#0b1a25" stroke-width="0.7" stroke-linejoin="round"/><polygon points="558.9,579.6 563.5,583.9 568.6,580.5 564.1,576.2" fill="#63c5ff" stroke="#0b1a25" stroke-width="0.7" stroke-linejoin="round"/><polygon points="563.8,592.4 570.2,598.5 570.8,590.8 566.2,586.5" fill="#3a7cab" stroke="#0b1a25" stroke-width="0.7" stroke-linejoin="round"/><polygon points="570.2,598.5 578.4,593.5 576.0,587.4 570.8,590.8" fill="#1f4057" stroke="#0b1a25" stroke-width="0.7" stroke-linejoin="round"/><polygon points="566.2,586.5 570.8,590.8 576.0,587.4 571.4,583.0" fill="#63c5ff" stroke="#0b1a25" stroke-width="0.7" stroke-linejoin="round"/><polygon points="576.5,604.5 583.1,610.7 583.7,603.0 579.0,598.5" fill="#3a7cab" stroke="#0b1a25" stroke-width="0.7" stroke-linejoin="round"/><polygon points="583.1,610.7 591.4,605.6 588.9,599.5 583.7,603.0" fill="#1f4057" stroke="#0b1a25" stroke-width="0.7" stroke-linejoin="round"/><polygon points="579.0,598.5 583.7,603.0 588.9,599.5 584.2,595.1" fill="#63c5ff" stroke="#0b1a25" stroke-width="0.7" stroke-linejoin="round"/><polygon points="584.0,611.6 590.6,617.8 591.2,610.1 586.5,605.6" fill="#3a7cab" stroke="#0b1a25" stroke-width="0.7" stroke-linejoin="round"/><polygon points="590.6,617.8 598.9,612.7 596.4,606.5 591.2,610.1" fill="#1f4057" stroke="#0b1a25" stroke-width="0.7" stroke-linejoin="round"/><polygon points="586.5,605.6 591.2,610.1 596.4,606.5 591.7,602.1" fill="#63c5ff" stroke="#0b1a25" stroke-width="0.7" stroke-linejoin="round"/><polygon points="470.0,531.1 474.5,535.3 475.2,527.7 472.4,525.1" fill="#3a7cab" stroke="#0b1a25" stroke-width="0.7" stroke-linejoin="round"/><polygon points="474.5,535.3 482.6,530.7 480.2,524.5 475.2,527.7" fill="#1f4057" stroke="#0b1a25" stroke-width="0.7" stroke-linejoin="round"/><polygon points="472.4,525.1 475.2,527.7 480.2,524.5 477.5,521.9" fill="#63c5ff" stroke="#0b1a25" stroke-width="0.7" stroke-linejoin="round"/><polygon points="475.3,536.1 479.7,540.3 480.4,532.8 477.6,530.1" fill="#3a7cab" stroke="#0b1a25" stroke-width="0.7" stroke-linejoin="round"/><polygon points="479.7,540.3 487.8,535.7 485.5,529.5 480.4,532.8" fill="#1f4057" stroke="#0b1a25" stroke-width="0.7" stroke-linejoin="round"/><polygon points="477.6,530.1 480.4,532.8 485.5,529.5 482.7,526.9" fill="#63c5ff" stroke="#0b1a25" stroke-width="0.7" stroke-linejoin="round"/><polygon points="480.5,541.1 485.0,545.4 485.7,537.8 482.9,535.1" fill="#3a7cab" stroke="#0b1a25" stroke-width="0.7" stroke-linejoin="round"/><polygon points="485.0,545.4 493.1,540.7 490.7,534.6 485.7,537.8" fill="#1f4057" stroke="#0b1a25" stroke-width="0.7" stroke-linejoin="round"/><polygon points="482.9,535.1 485.7,537.8 490.7,534.6 487.9,531.9" fill="#63c5ff" stroke="#0b1a25" stroke-width="0.7" stroke-linejoin="round"/><polygon points="485.8,546.2 490.3,550.5 491.0,542.9 488.2,540.2" fill="#3a7cab" stroke="#0b1a25" stroke-width="0.7" stroke-linejoin="round"/><polygon points="490.3,550.5 498.5,545.8 496.1,539.7 491.0,542.9" fill="#1f4057" stroke="#0b1a25" stroke-width="0.7" stroke-linejoin="round"/><polygon points="488.2,540.2 491.0,542.9 496.1,539.7 493.2,537.0" fill="#63c5ff" stroke="#0b1a25" stroke-width="0.7" stroke-linejoin="round"/><polygon points="491.1,551.3 495.6,555.7 496.3,548.1 493.5,545.3" fill="#3a7cab" stroke="#0b1a25" stroke-width="0.7" stroke-linejoin="round"/><polygon points="495.6,555.7 503.8,550.9 501.4,544.8 496.3,548.1" fill="#1f4057" stroke="#0b1a25" stroke-width="0.7" stroke-linejoin="round"/><polygon points="493.5,545.3 496.3,548.1 501.4,544.8 498.6,542.1" fill="#63c5ff" stroke="#0b1a25" stroke-width="0.7" stroke-linejoin="round"/><polygon points="496.5,556.5 501.0,560.9 501.7,553.2 498.9,550.5" fill="#3a7cab" stroke="#0b1a25" stroke-width="0.7" stroke-linejoin="round"/><polygon points="501.0,560.9 509.2,556.1 506.8,549.9 501.7,553.2" fill="#1f4057" stroke="#0b1a25" stroke-width="0.7" stroke-linejoin="round"/><polygon points="498.9,550.5 501.7,553.2 506.8,549.9 504.0,547.2" fill="#63c5ff" stroke="#0b1a25" stroke-width="0.7" stroke-linejoin="round"/><polygon points="501.9,561.7 506.5,566.1 507.2,558.5 504.3,555.7" fill="#3a7cab" stroke="#0b1a25" stroke-width="0.7" stroke-linejoin="round"/><polygon points="506.5,566.1 514.7,561.3 512.3,555.1 507.2,558.5" fill="#1f4057" stroke="#0b1a25" stroke-width="0.7" stroke-linejoin="round"/><polygon points="504.3,555.7 507.2,558.5 512.3,555.1 509.4,552.4" fill="#63c5ff" stroke="#0b1a25" stroke-width="0.7" stroke-linejoin="round"/><polygon points="507.3,566.9 512.0,571.4 512.6,563.7 509.7,560.9" fill="#3a7cab" stroke="#0b1a25" stroke-width="0.7" stroke-linejoin="round"/><polygon points="512.0,571.4 520.2,566.6 517.8,560.4 512.6,563.7" fill="#1f4057" stroke="#0b1a25" stroke-width="0.7" stroke-linejoin="round"/><polygon points="509.7,560.9 512.6,563.7 517.8,560.4 514.9,557.6" fill="#63c5ff" stroke="#0b1a25" stroke-width="0.7" stroke-linejoin="round"/><polygon points="512.8,572.2 517.5,576.7 518.2,569.0 515.2,566.2" fill="#3a7cab" stroke="#0b1a25" stroke-width="0.7" stroke-linejoin="round"/><polygon points="517.5,576.7 525.7,571.8 523.3,565.7 518.2,569.0" fill="#1f4057" stroke="#0b1a25" stroke-width="0.7" stroke-linejoin="round"/><polygon points="515.2,566.2 518.2,569.0 523.3,565.7 520.4,562.9" fill="#63c5ff" stroke="#0b1a25" stroke-width="0.7" stroke-linejoin="round"/><polygon points="518.3,577.5 523.0,582.1 523.7,574.4 520.8,571.6" fill="#3a7cab" stroke="#0b1a25" stroke-width="0.7" stroke-linejoin="round"/><polygon points="523.0,582.1 531.3,577.2 528.9,571.0 523.7,574.4" fill="#1f4057" stroke="#0b1a25" stroke-width="0.7" stroke-linejoin="round"/><polygon points="520.8,571.6 523.7,574.4 528.9,571.0 525.9,568.2" fill="#63c5ff" stroke="#0b1a25" stroke-width="0.7" stroke-linejoin="round"/><polygon points="523.9,582.9 528.7,587.5 529.3,579.8 526.3,576.9" fill="#3a7cab" stroke="#0b1a25" stroke-width="0.7" stroke-linejoin="round"/><polygon points="528.7,587.5 536.9,582.5 534.5,576.4 529.3,579.8" fill="#1f4057" stroke="#0b1a25" stroke-width="0.7" stroke-linejoin="round"/><polygon points="526.3,576.9 529.3,579.8 534.5,576.4 531.5,573.5" fill="#63c5ff" stroke="#0b1a25" stroke-width="0.7" stroke-linejoin="round"/><polygon points="529.5,588.3 534.3,592.9 535.0,585.2 532.0,582.3" fill="#3a7cab" stroke="#0b1a25" stroke-width="0.7" stroke-linejoin="round"/><polygon points="534.3,592.9 542.6,588.0 540.1,581.8 535.0,585.2" fill="#1f4057" stroke="#0b1a25" stroke-width="0.7" stroke-linejoin="round"/><polygon points="532.0,582.3 535.0,585.2 540.1,581.8 537.1,578.9" fill="#63c5ff" stroke="#0b1a25" stroke-width="0.7" stroke-linejoin="round"/><polygon points="535.2,593.7 540.0,598.4 540.7,590.7 537.6,587.8" fill="#3a7cab" stroke="#0b1a25" stroke-width="0.7" stroke-linejoin="round"/><polygon points="540.0,598.4 548.3,593.4 545.8,587.2 540.7,590.7" fill="#1f4057" stroke="#0b1a25" stroke-width="0.7" stroke-linejoin="round"/><polygon points="537.6,587.8 540.7,590.7 545.8,587.2 542.8,584.3" fill="#63c5ff" stroke="#0b1a25" stroke-width="0.7" stroke-linejoin="round"/><polygon points="540.9,599.2 545.8,603.9 546.4,596.2 543.4,593.3" fill="#3a7cab" stroke="#0b1a25" stroke-width="0.7" stroke-linejoin="round"/><polygon points="545.8,603.9 554.1,598.9 551.6,592.7 546.4,596.2" fill="#1f4057" stroke="#0b1a25" stroke-width="0.7" stroke-linejoin="round"/><polygon points="543.4,593.3 546.4,596.2 551.6,592.7 548.5,589.8" fill="#63c5ff" stroke="#0b1a25" stroke-width="0.7" stroke-linejoin="round"/><polygon points="546.6,604.8 551.5,609.5 552.2,601.7 549.1,598.8" fill="#3a7cab" stroke="#0b1a25" stroke-width="0.7" stroke-linejoin="round"/><polygon points="551.5,609.5 559.9,604.4 557.4,598.3 552.2,601.7" fill="#1f4057" stroke="#0b1a25" stroke-width="0.7" stroke-linejoin="round"/><polygon points="549.1,598.8 552.2,601.7 557.4,598.3 554.3,595.3" fill="#63c5ff" stroke="#0b1a25" stroke-width="0.7" stroke-linejoin="round"/><polygon points="555.9,613.7 560.9,618.5 561.5,610.7 558.4,607.8" fill="#3a7cab" stroke="#0b1a25" stroke-width="0.7" stroke-linejoin="round"/><polygon points="560.9,618.5 569.3,613.4 566.8,607.2 561.5,610.7" fill="#1f4057" stroke="#0b1a25" stroke-width="0.7" stroke-linejoin="round"/><polygon points="558.4,607.8 561.5,610.7 566.8,607.2 563.6,604.2" fill="#63c5ff" stroke="#0b1a25" stroke-width="0.7" stroke-linejoin="round"/><polygon points="561.8,619.4 566.8,624.2 567.4,616.4 564.3,613.4" fill="#3a7cab" stroke="#0b1a25" stroke-width="0.7" stroke-linejoin="round"/><polygon points="566.8,624.2 575.2,619.1 572.7,612.9 567.4,616.4" fill="#1f4057" stroke="#0b1a25" stroke-width="0.7" stroke-linejoin="round"/><polygon points="564.3,613.4 567.4,616.4 572.7,612.9 569.5,609.9" fill="#63c5ff" stroke="#0b1a25" stroke-width="0.7" stroke-linejoin="round"/><polygon points="567.7,628.7 572.7,633.6 573.4,625.8 570.2,622.7" fill="#3a7cab" stroke="#0b1a25" stroke-width="0.7" stroke-linejoin="round"/><polygon points="572.7,633.6 581.1,628.4 578.6,622.2 573.4,625.8" fill="#1f4057" stroke="#0b1a25" stroke-width="0.7" stroke-linejoin="round"/><polygon points="570.2,622.7 573.4,625.8 578.6,622.2 575.4,619.2" fill="#63c5ff" stroke="#0b1a25" stroke-width="0.7" stroke-linejoin="round"/><polygon points="573.6,634.5 578.7,639.4 579.4,631.6 576.2,628.5" fill="#3a7cab" stroke="#0b1a25" stroke-width="0.7" stroke-linejoin="round"/><polygon points="578.7,639.4 587.2,634.2 584.6,628.0 579.4,631.6" fill="#1f4057" stroke="#0b1a25" stroke-width="0.7" stroke-linejoin="round"/><polygon points="576.2,628.5 579.4,631.6 584.6,628.0 581.4,624.9" fill="#63c5ff" stroke="#0b1a25" stroke-width="0.7" stroke-linejoin="round"/><polygon points="579.7,640.3 584.8,645.3 585.4,637.4 582.2,634.3" fill="#3a7cab" stroke="#0b1a25" stroke-width="0.7" stroke-linejoin="round"/><polygon points="584.8,645.3 593.3,640.0 590.7,633.8 585.4,637.4" fill="#1f4057" stroke="#0b1a25" stroke-width="0.7" stroke-linejoin="round"/><polygon points="582.2,634.3 585.4,637.4 590.7,633.8 587.5,630.7" fill="#63c5ff" stroke="#0b1a25" stroke-width="0.7" stroke-linejoin="round"/><polygon points="585.7,646.1 590.9,651.2 591.5,643.3 588.3,640.2" fill="#3a7cab" stroke="#0b1a25" stroke-width="0.7" stroke-linejoin="round"/><polygon points="590.9,651.2 599.4,645.9 596.8,639.7 591.5,643.3" fill="#1f4057" stroke="#0b1a25" stroke-width="0.7" stroke-linejoin="round"/><polygon points="588.3,640.2 591.5,643.3 596.8,639.7 593.6,636.6" fill="#63c5ff" stroke="#0b1a25" stroke-width="0.7" stroke-linejoin="round"/><polygon points="460.4,536.5 467.4,543.3 468.1,535.7 462.8,530.5" fill="#3a7cab" stroke="#0b1a25" stroke-width="0.7" stroke-linejoin="round"/><polygon points="467.4,543.3 475.6,538.6 473.2,532.5 468.1,535.7" fill="#1f4057" stroke="#0b1a25" stroke-width="0.7" stroke-linejoin="round"/><polygon points="462.8,530.5 468.1,535.7 473.2,532.5 467.9,527.3" fill="#63c5ff" stroke="#0b1a25" stroke-width="0.7" stroke-linejoin="round"/><polygon points="468.2,544.1 472.7,548.4 473.4,540.8 470.6,538.1" fill="#3a7cab" stroke="#0b1a25" stroke-width="0.7" stroke-linejoin="round"/><polygon points="472.7,548.4 480.9,543.7 478.5,537.5 473.4,540.8" fill="#1f4057" stroke="#0b1a25" stroke-width="0.7" stroke-linejoin="round"/><polygon points="470.6,538.1 473.4,540.8 478.5,537.5 475.7,534.9" fill="#63c5ff" stroke="#0b1a25" stroke-width="0.7" stroke-linejoin="round"/><polygon points="473.5,549.2 477.9,553.5 478.7,545.9 475.9,543.2" fill="#3a7cab" stroke="#0b1a25" stroke-width="0.7" stroke-linejoin="round"/><polygon points="477.9,553.5 486.2,548.8 483.8,542.6 478.7,545.9" fill="#1f4057" stroke="#0b1a25" stroke-width="0.7" stroke-linejoin="round"/><polygon points="475.9,543.2 478.7,545.9 483.8,542.6 481.0,539.9" fill="#63c5ff" stroke="#0b1a25" stroke-width="0.7" stroke-linejoin="round"/><polygon points="478.8,554.3 483.3,558.7 484.0,551.1 481.1,548.3" fill="#3a7cab" stroke="#0b1a25" stroke-width="0.7" stroke-linejoin="round"/><polygon points="483.3,558.7 491.5,554.0 489.1,547.8 484.0,551.1" fill="#1f4057" stroke="#0b1a25" stroke-width="0.7" stroke-linejoin="round"/><polygon points="481.1,548.3 484.0,551.1 489.1,547.8 486.3,545.1" fill="#63c5ff" stroke="#0b1a25" stroke-width="0.7" stroke-linejoin="round"/><polygon points="484.1,559.5 488.6,563.9 489.3,556.3 486.5,553.5" fill="#3a7cab" stroke="#0b1a25" stroke-width="0.7" stroke-linejoin="round"/><polygon points="488.6,563.9 496.9,559.1 494.5,553.0 489.3,556.3" fill="#1f4057" stroke="#0b1a25" stroke-width="0.7" stroke-linejoin="round"/><polygon points="486.5,553.5 489.3,556.3 494.5,553.0 491.6,550.2" fill="#63c5ff" stroke="#0b1a25" stroke-width="0.7" stroke-linejoin="round"/><polygon points="489.4,564.7 494.0,569.2 494.7,561.5 491.9,558.7" fill="#3a7cab" stroke="#0b1a25" stroke-width="0.7" stroke-linejoin="round"/><polygon points="494.0,569.2 502.3,564.4 499.9,558.2 494.7,561.5" fill="#1f4057" stroke="#0b1a25" stroke-width="0.7" stroke-linejoin="round"/><polygon points="491.9,558.7 494.7,561.5 499.9,558.2 497.0,555.4" fill="#63c5ff" stroke="#0b1a25" stroke-width="0.7" stroke-linejoin="round"/><polygon points="494.8,570.0 499.5,574.5 500.2,566.8 497.3,564.0" fill="#3a7cab" stroke="#0b1a25" stroke-width="0.7" stroke-linejoin="round"/><polygon points="499.5,574.5 507.7,569.6 505.3,563.4 500.2,566.8" fill="#1f4057" stroke="#0b1a25" stroke-width="0.7" stroke-linejoin="round"/><polygon points="497.3,564.0 500.2,566.8 505.3,563.4 502.4,560.7" fill="#63c5ff" stroke="#0b1a25" stroke-width="0.7" stroke-linejoin="round"/><polygon points="500.3,575.3 504.9,579.8 505.6,572.1 502.7,569.3" fill="#3a7cab" stroke="#0b1a25" stroke-width="0.7" stroke-linejoin="round"/><polygon points="504.9,579.8 513.2,574.9 510.8,568.7 505.6,572.1" fill="#1f4057" stroke="#0b1a25" stroke-width="0.7" stroke-linejoin="round"/><polygon points="502.7,569.3 505.6,572.1 510.8,568.7 507.9,565.9" fill="#63c5ff" stroke="#0b1a25" stroke-width="0.7" stroke-linejoin="round"/><polygon points="505.8,580.6 510.5,585.2 511.2,577.5 508.2,574.6" fill="#3a7cab" stroke="#0b1a25" stroke-width="0.7" stroke-linejoin="round"/><polygon points="510.5,585.2 518.8,580.3 516.3,574.1 511.2,577.5" fill="#1f4057" stroke="#0b1a25" stroke-width="0.7" stroke-linejoin="round"/><polygon points="508.2,574.6 511.2,577.5 516.3,574.1 513.4,571.3" fill="#63c5ff" stroke="#0b1a25" stroke-width="0.7" stroke-linejoin="round"/><polygon points="511.3,586.0 516.0,590.6 516.7,582.9 513.8,580.0" fill="#3a7cab" stroke="#0b1a25" stroke-width="0.7" stroke-linejoin="round"/><polygon points="516.0,590.6 524.4,585.6 521.9,579.5 516.7,582.9" fill="#1f4057" stroke="#0b1a25" stroke-width="0.7" stroke-linejoin="round"/><polygon points="513.8,580.0 516.7,582.9 521.9,579.5 519.0,576.6" fill="#63c5ff" stroke="#0b1a25" stroke-width="0.7" stroke-linejoin="round"/><polygon points="516.9,591.4 521.7,596.1 522.3,588.3 519.4,585.4" fill="#3a7cab" stroke="#0b1a25" stroke-width="0.7" stroke-linejoin="round"/><polygon points="521.7,596.1 530.0,591.1 527.5,584.9 522.3,588.3" fill="#1f4057" stroke="#0b1a25" stroke-width="0.7" stroke-linejoin="round"/><polygon points="519.4,585.4 522.3,588.3 527.5,584.9 524.6,582.0" fill="#63c5ff" stroke="#0b1a25" stroke-width="0.7" stroke-linejoin="round"/><polygon points="522.5,596.9 527.3,601.6 528.0,593.8 525.0,590.9" fill="#3a7cab" stroke="#0b1a25" stroke-width="0.7" stroke-linejoin="round"/><polygon points="527.3,601.6 535.7,596.5 533.2,590.4 528.0,593.8" fill="#1f4057" stroke="#0b1a25" stroke-width="0.7" stroke-linejoin="round"/><polygon points="525.0,590.9 528.0,593.8 533.2,590.4 530.2,587.5" fill="#63c5ff" stroke="#0b1a25" stroke-width="0.7" stroke-linejoin="round"/><polygon points="528.2,602.4 533.0,607.1 533.7,599.4 530.7,596.4" fill="#3a7cab" stroke="#0b1a25" stroke-width="0.7" stroke-linejoin="round"/><polygon points="533.0,607.1 541.4,602.1 538.9,595.9 533.7,599.4" fill="#1f4057" stroke="#0b1a25" stroke-width="0.7" stroke-linejoin="round"/><polygon points="530.7,596.4 533.7,599.4 538.9,595.9 535.9,593.0" fill="#63c5ff" stroke="#0b1a25" stroke-width="0.7" stroke-linejoin="round"/><polygon points="533.9,607.9 541.7,615.5 542.3,607.7 536.4,602.0" fill="#3a7cab" stroke="#0b1a25" stroke-width="0.7" stroke-linejoin="round"/><polygon points="541.7,615.5 550.0,610.4 547.5,604.2 542.3,607.7" fill="#1f4057" stroke="#0b1a25" stroke-width="0.7" stroke-linejoin="round"/><polygon points="536.4,602.0 542.3,607.7 547.5,604.2 541.6,598.5" fill="#63c5ff" stroke="#0b1a25" stroke-width="0.7" stroke-linejoin="round"/><polygon points="546.0,619.7 551.0,624.6 551.6,616.8 548.5,613.8" fill="#3a7cab" stroke="#0b1a25" stroke-width="0.7" stroke-linejoin="round"/><polygon points="551.0,624.6 559.4,619.4 556.9,613.2 551.6,616.8" fill="#1f4057" stroke="#0b1a25" stroke-width="0.7" stroke-linejoin="round"/><polygon points="548.5,613.8 551.6,616.8 556.9,613.2 553.8,610.2" fill="#63c5ff" stroke="#0b1a25" stroke-width="0.7" stroke-linejoin="round"/><polygon points="551.9,625.4 556.9,630.3 557.5,622.5 554.4,619.5" fill="#3a7cab" stroke="#0b1a25" stroke-width="0.7" stroke-linejoin="round"/><polygon points="556.9,630.3 565.3,625.1 562.8,618.9 557.5,622.5" fill="#1f4057" stroke="#0b1a25" stroke-width="0.7" stroke-linejoin="round"/><polygon points="554.4,619.5 557.5,622.5 562.8,618.9 559.7,615.9" fill="#63c5ff" stroke="#0b1a25" stroke-width="0.7" stroke-linejoin="round"/><polygon points="557.7,634.8 562.7,639.8 563.4,631.9 560.2,628.9" fill="#3a7cab" stroke="#0b1a25" stroke-width="0.7" stroke-linejoin="round"/><polygon points="562.7,639.8 571.2,634.5 568.7,628.3 563.4,631.9" fill="#1f4057" stroke="#0b1a25" stroke-width="0.7" stroke-linejoin="round"/><polygon points="560.2,628.9 563.4,631.9 568.7,628.3 565.5,625.3" fill="#63c5ff" stroke="#0b1a25" stroke-width="0.7" stroke-linejoin="round"/><polygon points="563.6,640.6 568.7,645.6 569.4,637.8 566.2,634.7" fill="#3a7cab" stroke="#0b1a25" stroke-width="0.7" stroke-linejoin="round"/><polygon points="568.7,645.6 577.2,640.3 574.7,634.2 569.4,637.8" fill="#1f4057" stroke="#0b1a25" stroke-width="0.7" stroke-linejoin="round"/><polygon points="566.2,634.7 569.4,637.8 574.7,634.2 571.5,631.1" fill="#63c5ff" stroke="#0b1a25" stroke-width="0.7" stroke-linejoin="round"/><polygon points="569.7,646.5 574.8,651.5 575.4,643.7 572.2,640.5" fill="#3a7cab" stroke="#0b1a25" stroke-width="0.7" stroke-linejoin="round"/><polygon points="574.8,651.5 583.3,646.2 580.7,640.0 575.4,643.7" fill="#1f4057" stroke="#0b1a25" stroke-width="0.7" stroke-linejoin="round"/><polygon points="572.2,640.5 575.4,643.7 580.7,640.0 577.5,636.9" fill="#63c5ff" stroke="#0b1a25" stroke-width="0.7" stroke-linejoin="round"/><polygon points="575.7,652.4 580.9,657.5 581.5,649.6 578.3,646.4" fill="#3a7cab" stroke="#0b1a25" stroke-width="0.7" stroke-linejoin="round"/><polygon points="580.9,657.5 589.4,652.1 586.8,645.9 581.5,649.6" fill="#1f4057" stroke="#0b1a25" stroke-width="0.7" stroke-linejoin="round"/><polygon points="578.3,646.4 581.5,649.6 586.8,645.9 583.6,642.8" fill="#63c5ff" stroke="#0b1a25" stroke-width="0.7" stroke-linejoin="round"/><polygon points="450.8,542.0 459.0,550.1 459.8,542.5 453.1,536.0" fill="#3a7cab" stroke="#0b1a25" stroke-width="0.7" stroke-linejoin="round"/><polygon points="459.0,550.1 467.3,545.4 464.9,539.3 459.8,542.5" fill="#1f4057" stroke="#0b1a25" stroke-width="0.7" stroke-linejoin="round"/><polygon points="453.1,536.0 459.8,542.5 464.9,539.3 458.3,532.8" fill="#63c5ff" stroke="#0b1a25" stroke-width="0.7" stroke-linejoin="round"/><polygon points="459.8,550.9 464.3,555.3 465.0,547.6 462.2,544.9" fill="#3a7cab" stroke="#0b1a25" stroke-width="0.7" stroke-linejoin="round"/><polygon points="464.3,555.3 472.5,550.5 470.1,544.4 465.0,547.6" fill="#1f4057" stroke="#0b1a25" stroke-width="0.7" stroke-linejoin="round"/><polygon points="462.2,544.9 465.0,547.6 470.1,544.4 467.4,541.7" fill="#63c5ff" stroke="#0b1a25" stroke-width="0.7" stroke-linejoin="round"/><polygon points="465.1,556.0 469.5,560.4 470.2,552.8 467.5,550.1" fill="#3a7cab" stroke="#0b1a25" stroke-width="0.7" stroke-linejoin="round"/><polygon points="469.5,560.4 477.8,555.7 475.4,549.5 470.2,552.8" fill="#1f4057" stroke="#0b1a25" stroke-width="0.7" stroke-linejoin="round"/><polygon points="467.5,550.1 470.2,552.8 475.4,549.5 472.6,546.8" fill="#63c5ff" stroke="#0b1a25" stroke-width="0.7" stroke-linejoin="round"/><polygon points="470.3,561.2 474.8,565.7 475.6,558.0 472.7,555.3" fill="#3a7cab" stroke="#0b1a25" stroke-width="0.7" stroke-linejoin="round"/><polygon points="474.8,565.7 483.1,560.9 480.7,554.7 475.6,558.0" fill="#1f4057" stroke="#0b1a25" stroke-width="0.7" stroke-linejoin="round"/><polygon points="472.7,555.3 475.6,558.0 480.7,554.7 477.9,551.9" fill="#63c5ff" stroke="#0b1a25" stroke-width="0.7" stroke-linejoin="round"/><polygon points="475.6,566.4 480.2,570.9 480.9,563.3 478.1,560.5" fill="#3a7cab" stroke="#0b1a25" stroke-width="0.7" stroke-linejoin="round"/><polygon points="480.2,570.9 488.5,566.1 486.1,559.9 480.9,563.3" fill="#1f4057" stroke="#0b1a25" stroke-width="0.7" stroke-linejoin="round"/><polygon points="478.1,560.5 480.9,563.3 486.1,559.9 483.2,557.1" fill="#63c5ff" stroke="#0b1a25" stroke-width="0.7" stroke-linejoin="round"/><polygon points="481.0,571.7 485.6,576.2 486.3,568.5 483.4,565.7" fill="#3a7cab" stroke="#0b1a25" stroke-width="0.7" stroke-linejoin="round"/><polygon points="485.6,576.2 493.9,571.4 491.5,565.2 486.3,568.5" fill="#1f4057" stroke="#0b1a25" stroke-width="0.7" stroke-linejoin="round"/><polygon points="483.4,565.7 486.3,568.5 491.5,565.2 488.6,562.4" fill="#63c5ff" stroke="#0b1a25" stroke-width="0.7" stroke-linejoin="round"/><polygon points="486.4,577.0 491.0,581.5 491.7,573.9 488.8,571.0" fill="#3a7cab" stroke="#0b1a25" stroke-width="0.7" stroke-linejoin="round"/><polygon points="491.0,581.5 499.3,576.7 496.9,570.5 491.7,573.9" fill="#1f4057" stroke="#0b1a25" stroke-width="0.7" stroke-linejoin="round"/><polygon points="488.8,571.0 491.7,573.9 496.9,570.5 494.0,567.7" fill="#63c5ff" stroke="#0b1a25" stroke-width="0.7" stroke-linejoin="round"/><polygon points="491.8,582.4 496.5,586.9 497.2,579.2 494.3,576.4" fill="#3a7cab" stroke="#0b1a25" stroke-width="0.7" stroke-linejoin="round"/><polygon points="496.5,586.9 504.8,582.0 502.4,575.8 497.2,579.2" fill="#1f4057" stroke="#0b1a25" stroke-width="0.7" stroke-linejoin="round"/><polygon points="494.3,576.4 497.2,579.2 502.4,575.8 499.5,573.0" fill="#63c5ff" stroke="#0b1a25" stroke-width="0.7" stroke-linejoin="round"/><polygon points="497.3,587.7 502.0,592.4 502.7,584.6 499.8,581.8" fill="#3a7cab" stroke="#0b1a25" stroke-width="0.7" stroke-linejoin="round"/><polygon points="502.0,592.4 510.4,587.4 507.9,581.2 502.7,584.6" fill="#1f4057" stroke="#0b1a25" stroke-width="0.7" stroke-linejoin="round"/><polygon points="499.8,581.8 502.7,584.6 507.9,581.2 505.0,578.4" fill="#63c5ff" stroke="#0b1a25" stroke-width="0.7" stroke-linejoin="round"/><polygon points="502.8,593.2 507.6,597.8 508.3,590.1 505.3,587.2" fill="#3a7cab" stroke="#0b1a25" stroke-width="0.7" stroke-linejoin="round"/><polygon points="507.6,597.8 516.0,592.8 513.5,586.7 508.3,590.1" fill="#1f4057" stroke="#0b1a25" stroke-width="0.7" stroke-linejoin="round"/><polygon points="505.3,587.2 508.3,590.1 513.5,586.7 510.5,583.8" fill="#63c5ff" stroke="#0b1a25" stroke-width="0.7" stroke-linejoin="round"/><polygon points="508.4,598.6 513.2,603.3 513.9,595.6 510.9,592.7" fill="#3a7cab" stroke="#0b1a25" stroke-width="0.7" stroke-linejoin="round"/><polygon points="513.2,603.3 521.6,598.3 519.1,592.1 513.9,595.6" fill="#1f4057" stroke="#0b1a25" stroke-width="0.7" stroke-linejoin="round"/><polygon points="510.9,592.7 513.9,595.6 519.1,592.1 516.1,589.2" fill="#63c5ff" stroke="#0b1a25" stroke-width="0.7" stroke-linejoin="round"/><polygon points="514.0,604.2 518.8,608.9 519.5,601.1 516.5,598.2" fill="#3a7cab" stroke="#0b1a25" stroke-width="0.7" stroke-linejoin="round"/><polygon points="518.8,608.9 527.2,603.8 524.8,597.7 519.5,601.1" fill="#1f4057" stroke="#0b1a25" stroke-width="0.7" stroke-linejoin="round"/><polygon points="516.5,598.2 519.5,601.1 524.8,597.7 521.8,594.7" fill="#63c5ff" stroke="#0b1a25" stroke-width="0.7" stroke-linejoin="round"/><polygon points="519.7,609.7 524.5,614.5 525.2,606.7 522.2,603.8" fill="#3a7cab" stroke="#0b1a25" stroke-width="0.7" stroke-linejoin="round"/><polygon points="524.5,614.5 532.9,609.4 530.5,603.2 525.2,606.7" fill="#1f4057" stroke="#0b1a25" stroke-width="0.7" stroke-linejoin="round"/><polygon points="522.2,603.8 525.2,606.7 530.5,603.2 527.4,600.3" fill="#63c5ff" stroke="#0b1a25" stroke-width="0.7" stroke-linejoin="round"/><polygon points="547.7,641.0 552.7,646.0 553.4,638.1 550.2,635.0" fill="#3a7cab" stroke="#0b1a25" stroke-width="0.7" stroke-linejoin="round"/><polygon points="552.7,646.0 561.2,640.7 558.7,634.5 553.4,638.1" fill="#1f4057" stroke="#0b1a25" stroke-width="0.7" stroke-linejoin="round"/><polygon points="550.2,635.0 553.4,638.1 558.7,634.5 555.5,631.4" fill="#63c5ff" stroke="#0b1a25" stroke-width="0.7" stroke-linejoin="round"/><polygon points="553.6,646.9 558.7,651.9 559.3,644.0 556.2,640.9" fill="#3a7cab" stroke="#0b1a25" stroke-width="0.7" stroke-linejoin="round"/><polygon points="558.7,651.9 567.2,646.6 564.7,640.4 559.3,644.0" fill="#1f4057" stroke="#0b1a25" stroke-width="0.7" stroke-linejoin="round"/><polygon points="556.2,640.9 559.3,644.0 564.7,640.4 561.5,637.3" fill="#63c5ff" stroke="#0b1a25" stroke-width="0.7" stroke-linejoin="round"/><polygon points="559.6,652.8 564.7,657.8 565.4,649.9 562.2,646.8" fill="#3a7cab" stroke="#0b1a25" stroke-width="0.7" stroke-linejoin="round"/><polygon points="564.7,657.8 573.3,652.5 570.7,646.3 565.4,649.9" fill="#1f4057" stroke="#0b1a25" stroke-width="0.7" stroke-linejoin="round"/><polygon points="562.2,646.8 565.4,649.9 570.7,646.3 567.5,643.1" fill="#63c5ff" stroke="#0b1a25" stroke-width="0.7" stroke-linejoin="round"/><polygon points="565.6,658.7 570.8,663.8 571.4,655.9 568.2,652.7" fill="#3a7cab" stroke="#0b1a25" stroke-width="0.7" stroke-linejoin="round"/><polygon points="570.8,663.8 579.4,658.4 576.8,652.2 571.4,655.9" fill="#1f4057" stroke="#0b1a25" stroke-width="0.7" stroke-linejoin="round"/><polygon points="568.2,652.7 571.4,655.9 576.8,652.2 573.6,649.1" fill="#63c5ff" stroke="#0b1a25" stroke-width="0.7" stroke-linejoin="round"/><polygon points="528.6,624.8 533.5,629.7 534.2,621.9 531.1,618.8" fill="#3a7cab" stroke="#0b1a25" stroke-width="0.7" stroke-linejoin="round"/><polygon points="533.5,629.7 542.0,624.5 539.5,618.3 534.2,621.9" fill="#1f4057" stroke="#0b1a25" stroke-width="0.7" stroke-linejoin="round"/><polygon points="531.1,618.8 534.2,621.9 539.5,618.3 536.4,615.3" fill="#63c5ff" stroke="#0b1a25" stroke-width="0.7" stroke-linejoin="round"/><polygon points="441.0,547.5 451.9,558.3 452.6,550.6 443.4,541.5" fill="#3a7cab" stroke="#0b1a25" stroke-width="0.7" stroke-linejoin="round"/><polygon points="451.9,558.3 460.2,553.5 457.8,547.4 452.6,550.6" fill="#1f4057" stroke="#0b1a25" stroke-width="0.7" stroke-linejoin="round"/><polygon points="443.4,541.5 452.6,550.6 457.8,547.4 448.6,538.3" fill="#63c5ff" stroke="#0b1a25" stroke-width="0.7" stroke-linejoin="round"/><polygon points="452.6,559.1 457.1,563.5 457.8,555.8 455.0,553.1" fill="#3a7cab" stroke="#0b1a25" stroke-width="0.7" stroke-linejoin="round"/><polygon points="457.1,563.5 465.4,558.7 463.0,552.5 457.8,555.8" fill="#1f4057" stroke="#0b1a25" stroke-width="0.7" stroke-linejoin="round"/><polygon points="455.0,553.1 457.8,555.8 463.0,552.5 460.2,549.8" fill="#63c5ff" stroke="#0b1a25" stroke-width="0.7" stroke-linejoin="round"/><polygon points="457.9,564.3 462.4,568.7 463.1,561.0 460.3,558.3" fill="#3a7cab" stroke="#0b1a25" stroke-width="0.7" stroke-linejoin="round"/><polygon points="462.4,568.7 470.7,563.9 468.3,557.7 463.1,561.0" fill="#1f4057" stroke="#0b1a25" stroke-width="0.7" stroke-linejoin="round"/><polygon points="460.3,558.3 463.1,561.0 468.3,557.7 465.5,555.0" fill="#63c5ff" stroke="#0b1a25" stroke-width="0.7" stroke-linejoin="round"/><polygon points="463.2,569.5 467.7,574.0 468.4,566.3 465.6,563.5" fill="#3a7cab" stroke="#0b1a25" stroke-width="0.7" stroke-linejoin="round"/><polygon points="467.7,574.0 476.0,569.1 473.6,563.0 468.4,566.3" fill="#1f4057" stroke="#0b1a25" stroke-width="0.7" stroke-linejoin="round"/><polygon points="465.6,563.5 468.4,566.3 473.6,563.0 470.8,560.2" fill="#63c5ff" stroke="#0b1a25" stroke-width="0.7" stroke-linejoin="round"/><polygon points="468.5,574.8 473.0,579.3 473.7,571.6 470.9,568.8" fill="#3a7cab" stroke="#0b1a25" stroke-width="0.7" stroke-linejoin="round"/><polygon points="473.0,579.3 481.4,574.4 479.0,568.2 473.7,571.6" fill="#1f4057" stroke="#0b1a25" stroke-width="0.7" stroke-linejoin="round"/><polygon points="470.9,568.8 473.7,571.6 479.0,568.2 476.1,565.4" fill="#63c5ff" stroke="#0b1a25" stroke-width="0.7" stroke-linejoin="round"/><polygon points="473.8,580.1 478.4,584.6 479.1,577.0 476.3,574.1" fill="#3a7cab" stroke="#0b1a25" stroke-width="0.7" stroke-linejoin="round"/><polygon points="478.4,584.6 486.8,579.7 484.4,573.6 479.1,577.0" fill="#1f4057" stroke="#0b1a25" stroke-width="0.7" stroke-linejoin="round"/><polygon points="476.3,574.1 479.1,577.0 484.4,573.6 481.5,570.7" fill="#63c5ff" stroke="#0b1a25" stroke-width="0.7" stroke-linejoin="round"/><polygon points="479.2,585.5 483.8,590.0 484.6,582.3 481.7,579.5" fill="#3a7cab" stroke="#0b1a25" stroke-width="0.7" stroke-linejoin="round"/><polygon points="483.8,590.0 492.2,585.1 489.8,578.9 484.6,582.3" fill="#1f4057" stroke="#0b1a25" stroke-width="0.7" stroke-linejoin="round"/><polygon points="481.7,579.5 484.6,582.3 489.8,578.9 486.9,576.1" fill="#63c5ff" stroke="#0b1a25" stroke-width="0.7" stroke-linejoin="round"/><polygon points="484.7,590.9 489.3,595.5 490.0,587.8 487.1,584.9" fill="#3a7cab" stroke="#0b1a25" stroke-width="0.7" stroke-linejoin="round"/><polygon points="489.3,595.5 497.7,590.5 495.3,584.3 490.0,587.8" fill="#1f4057" stroke="#0b1a25" stroke-width="0.7" stroke-linejoin="round"/><polygon points="487.1,584.9 490.0,587.8 495.3,584.3 492.4,581.5" fill="#63c5ff" stroke="#0b1a25" stroke-width="0.7" stroke-linejoin="round"/><polygon points="490.1,596.3 494.8,601.0 495.5,593.2 492.6,590.3" fill="#3a7cab" stroke="#0b1a25" stroke-width="0.7" stroke-linejoin="round"/><polygon points="494.8,601.0 503.3,596.0 500.8,589.8 495.5,593.2" fill="#1f4057" stroke="#0b1a25" stroke-width="0.7" stroke-linejoin="round"/><polygon points="492.6,590.3 495.5,593.2 500.8,589.8 497.9,586.9" fill="#63c5ff" stroke="#0b1a25" stroke-width="0.7" stroke-linejoin="round"/><polygon points="495.7,601.8 500.4,606.5 501.1,598.7 498.2,595.8" fill="#3a7cab" stroke="#0b1a25" stroke-width="0.7" stroke-linejoin="round"/><polygon points="500.4,606.5 508.9,601.5 506.4,595.3 501.1,598.7" fill="#1f4057" stroke="#0b1a25" stroke-width="0.7" stroke-linejoin="round"/><polygon points="498.2,595.8 501.1,598.7 506.4,595.3 503.4,592.4" fill="#63c5ff" stroke="#0b1a25" stroke-width="0.7" stroke-linejoin="round"/><polygon points="501.2,607.3 506.0,612.1 506.7,604.3 503.7,601.4" fill="#3a7cab" stroke="#0b1a25" stroke-width="0.7" stroke-linejoin="round"/><polygon points="506.0,612.1 514.5,607.0 512.0,600.8 506.7,604.3" fill="#1f4057" stroke="#0b1a25" stroke-width="0.7" stroke-linejoin="round"/><polygon points="503.7,601.4 506.7,604.3 512.0,600.8 509.0,597.9" fill="#63c5ff" stroke="#0b1a25" stroke-width="0.7" stroke-linejoin="round"/><polygon points="506.9,612.9 511.7,617.7 512.4,609.9 509.4,606.9" fill="#3a7cab" stroke="#0b1a25" stroke-width="0.7" stroke-linejoin="round"/><polygon points="511.7,617.7 520.1,612.6 517.6,606.4 512.4,609.9" fill="#1f4057" stroke="#0b1a25" stroke-width="0.7" stroke-linejoin="round"/><polygon points="509.4,606.9 512.4,609.9 517.6,606.4 514.6,603.4" fill="#63c5ff" stroke="#0b1a25" stroke-width="0.7" stroke-linejoin="round"/><polygon points="515.4,621.3 521.7,627.6 522.3,619.8 517.9,615.4" fill="#3a7cab" stroke="#0b1a25" stroke-width="0.7" stroke-linejoin="round"/><polygon points="521.7,627.6 540.1,616.4 537.6,610.2 522.3,619.8" fill="#1f4057" stroke="#0b1a25" stroke-width="0.7" stroke-linejoin="round"/><polygon points="517.9,615.4 522.3,619.8 537.6,610.2 533.1,605.8" fill="#63c5ff" stroke="#0b1a25" stroke-width="0.7" stroke-linejoin="round"/><polygon points="537.5,647.2 542.6,652.2 543.2,644.4 540.1,641.2" fill="#3a7cab" stroke="#0b1a25" stroke-width="0.7" stroke-linejoin="round"/><polygon points="542.6,652.2 551.2,646.9 548.6,640.7 543.2,644.4" fill="#1f4057" stroke="#0b1a25" stroke-width="0.7" stroke-linejoin="round"/><polygon points="540.1,641.2 543.2,644.4 548.6,640.7 545.5,637.6" fill="#63c5ff" stroke="#0b1a25" stroke-width="0.7" stroke-linejoin="round"/><polygon points="543.5,653.1 548.5,658.1 549.2,650.3 546.0,647.1" fill="#3a7cab" stroke="#0b1a25" stroke-width="0.7" stroke-linejoin="round"/><polygon points="548.5,658.1 557.1,652.8 554.6,646.6 549.2,650.3" fill="#1f4057" stroke="#0b1a25" stroke-width="0.7" stroke-linejoin="round"/><polygon points="546.0,647.1 549.2,650.3 554.6,646.6 551.4,643.5" fill="#63c5ff" stroke="#0b1a25" stroke-width="0.7" stroke-linejoin="round"/><polygon points="549.4,659.0 554.5,664.1 555.2,656.2 552.0,653.1" fill="#3a7cab" stroke="#0b1a25" stroke-width="0.7" stroke-linejoin="round"/><polygon points="554.5,664.1 563.2,658.8 560.6,652.6 555.2,656.2" fill="#1f4057" stroke="#0b1a25" stroke-width="0.7" stroke-linejoin="round"/><polygon points="552.0,653.1 555.2,656.2 560.6,652.6 557.4,649.4" fill="#63c5ff" stroke="#0b1a25" stroke-width="0.7" stroke-linejoin="round"/><polygon points="555.5,665.0 560.6,670.2 561.3,662.3 558.0,659.1" fill="#3a7cab" stroke="#0b1a25" stroke-width="0.7" stroke-linejoin="round"/><polygon points="560.6,670.2 569.3,664.8 566.7,658.6 561.3,662.3" fill="#1f4057" stroke="#0b1a25" stroke-width="0.7" stroke-linejoin="round"/><polygon points="558.0,659.1 561.3,662.3 566.7,658.6 563.4,655.4" fill="#63c5ff" stroke="#0b1a25" stroke-width="0.7" stroke-linejoin="round"/><polygon points="431.2,553.1 435.6,557.4 436.3,549.8 433.6,547.1" fill="#3a7cab" stroke="#0b1a25" stroke-width="0.7" stroke-linejoin="round"/><polygon points="435.6,557.4 443.9,552.7 441.5,546.5 436.3,549.8" fill="#1f4057" stroke="#0b1a25" stroke-width="0.7" stroke-linejoin="round"/><polygon points="433.6,547.1 436.3,549.8 441.5,546.5 438.8,543.8" fill="#63c5ff" stroke="#0b1a25" stroke-width="0.7" stroke-linejoin="round"/><polygon points="436.3,558.2 440.7,562.6 441.5,555.0 438.7,552.2" fill="#3a7cab" stroke="#0b1a25" stroke-width="0.7" stroke-linejoin="round"/><polygon points="440.7,562.6 449.1,557.8 446.7,551.7 441.5,555.0" fill="#1f4057" stroke="#0b1a25" stroke-width="0.7" stroke-linejoin="round"/><polygon points="438.7,552.2 441.5,555.0 446.7,551.7 443.9,548.9" fill="#63c5ff" stroke="#0b1a25" stroke-width="0.7" stroke-linejoin="round"/><polygon points="441.5,563.4 451.2,573.1 451.9,565.4 443.9,557.4" fill="#3a7cab" stroke="#0b1a25" stroke-width="0.7" stroke-linejoin="round"/><polygon points="451.2,573.1 459.5,568.2 457.1,562.1 451.9,565.4" fill="#1f4057" stroke="#0b1a25" stroke-width="0.7" stroke-linejoin="round"/><polygon points="443.9,557.4 451.9,565.4 457.1,562.1 449.1,554.1" fill="#63c5ff" stroke="#0b1a25" stroke-width="0.7" stroke-linejoin="round"/><polygon points="451.9,573.9 461.7,583.7 462.5,576.0 454.4,567.9" fill="#3a7cab" stroke="#0b1a25" stroke-width="0.7" stroke-linejoin="round"/><polygon points="461.7,583.7 470.2,578.8 467.7,572.6 462.5,576.0" fill="#1f4057" stroke="#0b1a25" stroke-width="0.7" stroke-linejoin="round"/><polygon points="454.4,567.9 462.5,576.0 467.7,572.6 459.6,564.5" fill="#63c5ff" stroke="#0b1a25" stroke-width="0.7" stroke-linejoin="round"/><polygon points="462.6,584.5 475.8,597.8 476.5,590.1 465.0,578.5" fill="#3a7cab" stroke="#0b1a25" stroke-width="0.7" stroke-linejoin="round"/><polygon points="475.8,597.8 484.2,592.8 481.8,586.6 476.5,590.1" fill="#1f4057" stroke="#0b1a25" stroke-width="0.7" stroke-linejoin="round"/><polygon points="465.0,578.5 476.5,590.1 481.8,586.6 470.3,575.2" fill="#63c5ff" stroke="#0b1a25" stroke-width="0.7" stroke-linejoin="round"/><polygon points="476.6,598.6 481.2,603.3 482.0,595.5 479.1,592.6" fill="#3a7cab" stroke="#0b1a25" stroke-width="0.7" stroke-linejoin="round"/><polygon points="481.2,603.3 489.7,598.3 487.3,592.1 482.0,595.5" fill="#1f4057" stroke="#0b1a25" stroke-width="0.7" stroke-linejoin="round"/><polygon points="479.1,592.6 482.0,595.5 487.3,592.1 484.4,589.2" fill="#63c5ff" stroke="#0b1a25" stroke-width="0.7" stroke-linejoin="round"/><polygon points="482.1,604.1 486.8,608.8 487.5,601.1 484.6,598.1" fill="#3a7cab" stroke="#0b1a25" stroke-width="0.7" stroke-linejoin="round"/><polygon points="486.8,608.8 495.3,603.8 492.8,597.6 487.5,601.1" fill="#1f4057" stroke="#0b1a25" stroke-width="0.7" stroke-linejoin="round"/><polygon points="484.6,598.1 487.5,601.1 492.8,597.6 489.9,594.7" fill="#63c5ff" stroke="#0b1a25" stroke-width="0.7" stroke-linejoin="round"/><polygon points="487.6,609.7 492.3,614.4 493.0,606.6 490.1,603.7" fill="#3a7cab" stroke="#0b1a25" stroke-width="0.7" stroke-linejoin="round"/><polygon points="492.3,614.4 500.8,609.3 498.4,603.1 493.0,606.6" fill="#1f4057" stroke="#0b1a25" stroke-width="0.7" stroke-linejoin="round"/><polygon points="490.1,603.7 493.0,606.6 498.4,603.1 495.4,600.2" fill="#63c5ff" stroke="#0b1a25" stroke-width="0.7" stroke-linejoin="round"/><polygon points="493.2,615.2 497.9,620.0 498.6,612.2 495.7,609.3" fill="#3a7cab" stroke="#0b1a25" stroke-width="0.7" stroke-linejoin="round"/><polygon points="497.9,620.0 506.5,614.9 504.0,608.7 498.6,612.2" fill="#1f4057" stroke="#0b1a25" stroke-width="0.7" stroke-linejoin="round"/><polygon points="495.7,609.3 498.6,612.2 504.0,608.7 501.0,605.8" fill="#63c5ff" stroke="#0b1a25" stroke-width="0.7" stroke-linejoin="round"/><polygon points="498.8,620.9 503.6,625.7 504.3,617.9 501.3,614.9" fill="#3a7cab" stroke="#0b1a25" stroke-width="0.7" stroke-linejoin="round"/><polygon points="503.6,625.7 512.1,620.6 509.6,614.4 504.3,617.9" fill="#1f4057" stroke="#0b1a25" stroke-width="0.7" stroke-linejoin="round"/><polygon points="501.3,614.9 504.3,617.9 509.6,614.4 506.6,611.4" fill="#63c5ff" stroke="#0b1a25" stroke-width="0.7" stroke-linejoin="round"/><polygon points="502.4,624.6 511.6,633.7 512.3,625.9 505.0,618.6" fill="#3a7cab" stroke="#0b1a25" stroke-width="0.7" stroke-linejoin="round"/><polygon points="511.6,633.7 520.1,628.5 517.6,622.3 512.3,625.9" fill="#1f4057" stroke="#0b1a25" stroke-width="0.7" stroke-linejoin="round"/><polygon points="505.0,618.6 512.3,625.9 517.6,622.3 510.3,615.1" fill="#63c5ff" stroke="#0b1a25" stroke-width="0.7" stroke-linejoin="round"/><polygon points="504.4,626.5 509.3,631.4 510.0,623.6 507.0,620.6" fill="#3a7cab" stroke="#0b1a25" stroke-width="0.7" stroke-linejoin="round"/><polygon points="509.3,631.4 517.8,626.2 515.3,620.1 510.0,623.6" fill="#1f4057" stroke="#0b1a25" stroke-width="0.7" stroke-linejoin="round"/><polygon points="507.0,620.6 510.0,623.6 515.3,620.1 512.3,617.0" fill="#63c5ff" stroke="#0b1a25" stroke-width="0.7" stroke-linejoin="round"/><polygon points="506.7,628.8 511.6,633.7 512.3,625.9 509.2,622.9" fill="#3a7cab" stroke="#0b1a25" stroke-width="0.7" stroke-linejoin="round"/><polygon points="511.6,633.7 520.1,628.5 517.6,622.3 512.3,625.9" fill="#1f4057" stroke="#0b1a25" stroke-width="0.7" stroke-linejoin="round"/><polygon points="509.2,622.9 512.3,625.9 517.6,622.3 514.6,619.3" fill="#63c5ff" stroke="#0b1a25" stroke-width="0.7" stroke-linejoin="round"/><polygon points="512.4,634.6 517.3,639.5 518.0,631.7 515.0,628.6" fill="#3a7cab" stroke="#0b1a25" stroke-width="0.7" stroke-linejoin="round"/><polygon points="517.3,639.5 525.9,634.3 523.4,628.1 518.0,631.7" fill="#1f4057" stroke="#0b1a25" stroke-width="0.7" stroke-linejoin="round"/><polygon points="515.0,628.6 518.0,631.7 523.4,628.1 520.3,625.0" fill="#63c5ff" stroke="#0b1a25" stroke-width="0.7" stroke-linejoin="round"/><polygon points="527.4,653.4 532.4,658.5 533.1,650.6 529.9,647.5" fill="#3a7cab" stroke="#0b1a25" stroke-width="0.7" stroke-linejoin="round"/><polygon points="532.4,658.5 541.0,653.2 538.5,647.0 533.1,650.6" fill="#1f4057" stroke="#0b1a25" stroke-width="0.7" stroke-linejoin="round"/><polygon points="529.9,647.5 533.1,650.6 538.5,647.0 535.3,643.8" fill="#63c5ff" stroke="#0b1a25" stroke-width="0.7" stroke-linejoin="round"/><polygon points="533.3,659.4 538.3,664.5 539.0,656.6 535.8,653.4" fill="#3a7cab" stroke="#0b1a25" stroke-width="0.7" stroke-linejoin="round"/><polygon points="538.3,664.5 547.0,659.1 544.4,652.9 539.0,656.6" fill="#1f4057" stroke="#0b1a25" stroke-width="0.7" stroke-linejoin="round"/><polygon points="535.8,653.4 539.0,656.6 544.4,652.9 541.2,649.8" fill="#63c5ff" stroke="#0b1a25" stroke-width="0.7" stroke-linejoin="round"/><polygon points="539.2,665.4 544.3,670.5 545.0,662.6 541.8,659.4" fill="#3a7cab" stroke="#0b1a25" stroke-width="0.7" stroke-linejoin="round"/><polygon points="544.3,670.5 553.0,665.1 550.4,658.9 545.0,662.6" fill="#1f4057" stroke="#0b1a25" stroke-width="0.7" stroke-linejoin="round"/><polygon points="541.8,659.4 545.0,662.6 550.4,658.9 547.2,655.7" fill="#63c5ff" stroke="#0b1a25" stroke-width="0.7" stroke-linejoin="round"/><polygon points="545.2,671.4 550.3,676.6 551.0,668.7 547.8,665.4" fill="#3a7cab" stroke="#0b1a25" stroke-width="0.7" stroke-linejoin="round"/><polygon points="550.3,676.6 559.1,671.1 556.4,664.9 551.0,668.7" fill="#1f4057" stroke="#0b1a25" stroke-width="0.7" stroke-linejoin="round"/><polygon points="547.8,665.4 551.0,668.7 556.4,664.9 553.2,661.7" fill="#63c5ff" stroke="#0b1a25" stroke-width="0.7" stroke-linejoin="round"/></svg>
<div class="abs" id="topblack"></div>
<div class="abs" id="titlebar"></div>
<div class="abs" id="rightwhite"></div>
<div class="abs" id="rightgray"></div>
<div class="abs" id="title">pc-8801fh_001*</div>
<div class="abs" id="toolbar"></div>
<div class="abs" id="brand1">AUTODESK<sup>&#9679;</sup></div>
<div class="abs" id="brand2">123D<sup>&#9679;</sup> DESIGN</div>
<div class="abs bluebtn" id="premium"><div class="l1">プレミアム版登録</div><div class="l2">(商業利用向け)</div></div>
<div class="abs bluebtn" id="signin">サインイン</div>
<div class="abs" id="help">?</div>
<div class="abs" id="rstrip"></div>
<div class="abs" id="rstripblue"></div>
<div class="abs" id="navpanel"></div>
<div class="abs" id="gridedit">グリッドを編集</div>
<div class="abs snapbox" style="left:1741px;">1</div>
<div class="abs snapbox" style="left:1821px;">1</div>
<div class="abs snaplbl" style="left:1741px;">長さスナップ</div>
<div class="abs snaplbl" style="left:1821px;">角度スナップ</div>
<div class="abs" id="taskbar"></div>
<div class="abs" id="tasksearch"></div>
<div class="abs" id="taskactive"></div>
<div class="abs" style="left:1915px;top:1048px;width:1px;height:8px;background:#4a4a4a;"></div>
<div class="abs" style="left:1821px;top:1053.5px;font-size:11px;line-height:12px;color:#fff;">1:55</div>
<svg id="chromesvg" width="1928" height="1056" viewBox="0 0 1928 1056"><polygon points="3,12 17,12 10,26" fill="#0c8fc4"/><polygon points="3,12 17,12 10,17" fill="#9fd8ee"/><polygon points="17,12 10,17 10,26" fill="#0a6288"/><path d="M1800 18.5h10" stroke="#111" stroke-width="1" fill="none"/><path d="M1844.5 15.5h7v7h-7z M1846.5 15.5v-2h7v7h-2" stroke="#111" stroke-width="1" fill="none"/><path d="M1890 13l10 10M1900 13l-10 10" stroke="#111" stroke-width="1.1" fill="none"/><defs><linearGradient id="lg1" x1="0" y1="0" x2="1" y2="1"><stop offset="0" stop-color="#c3d0d6"/><stop offset="1" stop-color="#9fb6c1"/></linearGradient><clipPath id="lgc"><rect x="8" y="39" width="43" height="43" rx="9"/></clipPath></defs><rect x="8" y="39" width="43" height="43" rx="9" fill="url(#lg1)"/><g clip-path="url(#lgc)"><polygon points="46.3,49.3 60,63 60,95 40,85 29.9,75.4" fill="#6d9ab0"/></g><polygon points="13.1,49.9 29.9,56.8 29.9,75.4" fill="#10a0d9"/><polygon points="13.1,49.9 46.3,49.3 29.9,56.8" fill="#bfe7f6"/><polygon points="46.3,49.3 29.9,56.8 29.9,75.4" fill="#0b678f"/><path d="M199 63l6 4l6-4" stroke="#1a1a1a" stroke-width="2" fill="none"/><defs><linearGradient id="vcl" x1="0" y1="0" x2="0.3" y2="1"><stop offset="0" stop-color="#f0f0f0"/><stop offset="1" stop-color="#d4d4d4"/></linearGradient><linearGradient id="vcr" x1="0" y1="0" x2="-0.2" y2="1"><stop offset="0" stop-color="#f1f1f1"/><stop offset="1" stop-color="#dadada"/></linearGradient><filter id="vcb" x="-30%" y="-30%" width="160%" height="160%"><feGaussianBlur stdDeviation="4"/></filter><linearGradient id="seph" x1="0" y1="0" x2="1" y2="0"><stop offset="0" stop-color="#888" stop-opacity="0"/><stop offset="0.5" stop-color="#888"/><stop offset="1" stop-color="#888" stop-opacity="0"/></linearGradient></defs><polygon points="1824,150 1856,178 1892,152 1893,170 1857,194 1826,170" fill="#000" opacity="0.13" filter="url(#vcb)"/><polygon points="1822.4,124.7 1859.1,107.3 1893.6,127 1855.8,146.7" fill="#f1f1f1"/><polygon points="1822.4,124.7 1855.8,146.7 1855.8,186 1825.8,162.6" fill="url(#vcl)"/><polygon points="1855.8,146.7 1893.6,127 1890.6,161.8 1855.8,186" fill="url(#vcr)"/><path d="M1822.4 124.7L1859.1 107.3L1893.6 127L1855.8 146.7ZM1855.8 146.7V186M1822.4 124.7L1825.8 162.6M1893.6 127L1890.6 161.8" stroke="#9a9a9a" stroke-width="0.7" stroke-dasharray="4 2" fill="none"/><polygon points="1849.2,143.5 1856,139.8 1862.9,143.8 1862.6,151.5 1855.8,155 1849.5,151" fill="#b3e0f3"/><path d="M1849.2 143.5L1855.8 147.2L1862.9 143.8M1855.8 147.2V155" stroke="#d9eff8" stroke-width="0.6" fill="none"/><text transform="matrix(0.887 -0.462 0.835 0.55 1862.0 127.2)" font-family="Liberation Sans, Noto Sans CJK JP, sans-serif" font-size="19" text-anchor="middle" y="6.8" fill="#1c1c1c">上</text><text transform="matrix(0.835 0.55 0.09 1.0 1840.0 156.5)" font-family="Liberation Sans, Noto Sans CJK JP, sans-serif" font-size="21" text-anchor="middle" y="7.6" fill="#1c1c1c">左</text><text transform="matrix(0.887 -0.462 -0.086 1.0 1874.8 156.0)" font-family="Liberation Sans, Noto Sans CJK JP, sans-serif" font-size="22" text-anchor="middle" y="7.9" fill="#1c1c1c">前</text><defs><linearGradient id="sepg" x1="0" y1="0" x2="0" y2="1"><stop offset="0" stop-color="#8a8a8a" stop-opacity="0"/><stop offset="0.5" stop-color="#7a7a7a"/><stop offset="1" stop-color="#8a8a8a" stop-opacity="0"/></linearGradient></defs><polygon points="615,58 624.2,52.4 624.2,63.4" fill="#222"/><path d="M623.5 57.6 C629 56.6 633.5 57.8 635.3 61.8" stroke="#222" stroke-width="2.7" fill="none"/><polygon points="677.5,58 668.8,52.6 668.8,63.4" fill="#b9b9b9"/><path d="M669.5 57.6 C664 56.6 659.5 57.8 657.7 61.8" stroke="#b9b9b9" stroke-width="2.7" fill="none"/><rect x="709.7" y="46" width="1" height="27" fill="url(#sepg)"/><rect x="795.9" y="46" width="1" height="27" fill="url(#sepg)"/><rect x="1268.9" y="46" width="1" height="27" fill="url(#sepg)"/><path d="M744 49.5 H757 M764.5 58 V70 M765 69.5 H744 M744.5 70 V49" stroke="#222" stroke-width="1" stroke-dasharray="1 1" fill="none"/><polygon points="747.3,57.3 753.0,60.1 753.0,67.6 747.3,64.8" fill="#6a6a6a" stroke="#333" stroke-width="0.5" stroke-linejoin="round"/><polygon points="753.0,60.1 758.7,57.3 758.7,64.8 753.0,67.6" fill="#2b2b2b" stroke="#333" stroke-width="0.5" stroke-linejoin="round"/><polygon points="747.3,57.3 753.0,54.5 758.7,57.3 753.0,60.1" fill="#fff" stroke="#333" stroke-width="0.5" stroke-linejoin="round"/><path d="M761.5 46.6v7.8M757.6 50.5h7.8" stroke="#222" stroke-width="1" fill="none"/><path d="M761.5 45.6l-1.6 2h3.2zM761.5 55.4l-1.6-2h3.2zM756.6 50.5l2-1.6v3.2zM766.4 50.5l-2-1.6v3.2z" fill="#222"/><polygon points="772.5,83.0 775.5,80.0 775.5,83.0" fill="#8a8a8a"/><polygon points="858.5,83.0 861.5,80.0 861.5,83.0" fill="#8a8a8a"/><polygon points="901.5,83.0 904.5,80.0 904.5,83.0" fill="#8a8a8a"/><polygon points="944.6,83.0 947.6,80.0 947.6,83.0" fill="#8a8a8a"/><polygon points="987.5,83.0 990.5,80.0 990.5,83.0" fill="#8a8a8a"/><polygon points="1030.5,83.0 1033.5,80.0 1033.5,83.0" fill="#8a8a8a"/><polygon points="1073.5,83.0 1076.5,80.0 1076.5,83.0" fill="#8a8a8a"/><polygon points="1116.5,83.0 1119.5,80.0 1119.5,83.0" fill="#8a8a8a"/><circle cx="844.7" cy="54.5" r="6.7" fill="#fff" stroke="#333" stroke-width="1"/><polygon points="829.2,55.9 837.1,59.7 837.1,70.0 829.2,66.2" fill="#6a6a6a" stroke="#333" stroke-width="0.5" stroke-linejoin="round"/><polygon points="837.1,59.7 845.0,55.9 845.0,66.2 837.1,70.0" fill="#2b2b2b" stroke="#333" stroke-width="0.5" stroke-linejoin="round"/><polygon points="829.2,55.9 837.1,52.1 845.0,55.9 837.1,59.7" fill="#fff" stroke="#333" stroke-width="0.5" stroke-linejoin="round"/><path d="M882.8 52.8 C876.5 48.5 870 53.5 873.5 60 C874.5 62.5 877 64.5 880.7 66.9" stroke="#222" stroke-width="0.9" fill="none"/><circle cx="882.8" cy="52.8" r="1.9" fill="#222"/><circle cx="876" cy="63" r="1.9" fill="#222"/><polygon points="891.6,48 896.4,51.2 888.2,62 883.6,58.6" fill="#2a2a2a"/><polygon points="882.9,59.6 887.4,63 880.5,67.2" fill="#2a2a2a"/><polygon points="917.9,55.6 925.8,59.4 925.8,69.7 917.9,65.9" fill="#6a6a6a" stroke="#333" stroke-width="0.5" stroke-linejoin="round"/><polygon points="925.8,59.4 933.7,55.6 933.7,65.9 925.8,69.7" fill="#2b2b2b" stroke="#333" stroke-width="0.5" stroke-linejoin="round"/><polygon points="917.9,55.6 925.8,51.8 933.7,55.6 925.8,59.4" fill="#fff" stroke="#333" stroke-width="0.5" stroke-linejoin="round"/><path d="M934.3 46.3L930.2 52.8" stroke="#2a2a2a" stroke-width="2.6"/><path d="M930.2 52.8L927.2 56.2" stroke="#2a2a2a" stroke-width="1"/><polygon points="957.8,56.0 965.7,59.8 965.7,70.1 957.8,66.3" fill="#6a6a6a" stroke="#333" stroke-width="0.5" stroke-linejoin="round"/><polygon points="965.7,59.8 973.6,56.0 973.6,66.3 965.7,70.1" fill="#2b2b2b" stroke="#333" stroke-width="0.5" stroke-linejoin="round"/><polygon points="957.8,56.0 965.7,52.2 973.6,56.0 965.7,59.8" fill="#fff" stroke="#333" stroke-width="0.5" stroke-linejoin="round"/><path d="M974.6 55.3V48.5M974.6 55.3H980.5" stroke="#222" stroke-width="1" fill="none"/><path d="M974.6 46.5l-1.8 2.6h3.6zM982.5 55.3l-2.6-1.8v3.6z" fill="#222"/><polygon points="1003.0,51.1 1007.0,52.9 1007.0,58.1 1003.0,56.3" fill="#6a6a6a" stroke="#333" stroke-width="0.5" stroke-linejoin="round"/><polygon points="1007.0,52.9 1011.0,51.1 1011.0,56.3 1007.0,58.1" fill="#2b2b2b" stroke="#333" stroke-width="0.5" stroke-linejoin="round"/><polygon points="1003.0,51.1 1007.0,49.3 1011.0,51.1 1007.0,52.9" fill="#fff" stroke="#333" stroke-width="0.5" stroke-linejoin="round"/><polygon points="1013.1,51.1 1017.1,52.9 1017.1,58.1 1013.1,56.3" fill="#6a6a6a" stroke="#333" stroke-width="0.5" stroke-linejoin="round"/><polygon points="1017.1,52.9 1021.1,51.1 1021.1,56.3 1017.1,58.1" fill="#2b2b2b" stroke="#333" stroke-width="0.5" stroke-linejoin="round"/><polygon points="1013.1,51.1 1017.1,49.3 1021.1,51.1 1017.1,52.9" fill="#fff" stroke="#333" stroke-width="0.5" stroke-linejoin="round"/><polygon points="1003.0,61.5 1007.0,63.3 1007.0,68.5 1003.0,66.7" fill="#6a6a6a" stroke="#333" stroke-width="0.5" stroke-linejoin="round"/><polygon points="1007.0,63.3 1011.0,61.5 1011.0,66.7 1007.0,68.5" fill="#2b2b2b" stroke="#333" stroke-width="0.5" stroke-linejoin="round"/><polygon points="1003.0,61.5 1007.0,59.7 1011.0,61.5 1007.0,63.3" fill="#fff" stroke="#333" stroke-width="0.5" stroke-linejoin="round"/><polygon points="1013.1,61.5 1017.1,63.3 1017.1,68.5 1013.1,66.7" fill="#6a6a6a" stroke="#333" stroke-width="0.5" stroke-linejoin="round"/><polygon points="1017.1,63.3 1021.1,61.5 1021.1,66.7 1017.1,68.5" fill="#2b2b2b" stroke="#333" stroke-width="0.5" stroke-linejoin="round"/><polygon points="1013.1,61.5 1017.1,59.7 1021.1,61.5 1017.1,63.3" fill="#fff" stroke="#333" stroke-width="0.5" stroke-linejoin="round"/><rect x="1044.9" y="49.0" width="2" height="2" fill="#333"/><rect x="1064.9" y="49.0" width="2" height="2" fill="#333"/><rect x="1044.9" y="68.7" width="2" height="2" fill="#333"/><rect x="1064.9" y="68.7" width="2" height="2" fill="#333"/><circle cx="1059.9" cy="56.2" r="5.7" fill="#fff" stroke="#333" stroke-width="0.9"/><polygon points="1047.1,58.5 1052.8,61.0 1052.8,68.8 1047.1,66.3" fill="#6a6a6a" stroke="#333" stroke-width="0.5" stroke-linejoin="round"/><polygon points="1052.8,61.0 1058.5,58.5 1058.5,66.3 1052.8,68.8" fill="#2b2b2b" stroke="#333" stroke-width="0.5" stroke-linejoin="round"/><polygon points="1047.1,58.5 1052.8,56.0 1058.5,58.5 1052.8,61.0" fill="#fff" stroke="#333" stroke-width="0.5" stroke-linejoin="round"/><polygon points="1103.5,56.2 1108.9,53.8 1108.9,63.5 1103.5,66.1" fill="#6a6a6a" stroke="#333" stroke-width="0.5"/><polygon points="1098.1,52.1 1101.4,50.3 1108.9,53.8 1105.6,55.7" fill="#fff" stroke="#333" stroke-width="0.5"/><polygon points="1089.1,56.4 1096.9,60.1 1096.9,69.7 1089.4,65.6" fill="#6a6a6a" stroke="#333" stroke-width="0.5"/><polygon points="1096.9,60.1 1103.5,56.6 1103.5,66.1 1096.9,69.7" fill="#2b2b2b" stroke="#333" stroke-width="0.5"/><polygon points="1089.1,56.4 1096.9,52.9 1103.5,56.2 1096.9,60.1" fill="#fff" stroke="#333" stroke-width="0.5"/><polygon points="1131.7,52.9 1139.2,57.1 1139.2,69.5 1131.7,65.3" fill="#6a6a6a" stroke="#333" stroke-width="0.5" stroke-linejoin="round"/><polygon points="1139.2,57.1 1146.7,52.9 1146.7,65.3 1139.2,69.5" fill="#2b2b2b" stroke="#333" stroke-width="0.5" stroke-linejoin="round"/><polygon points="1131.7,52.9 1139.2,48.7 1146.7,52.9 1139.2,57.1" fill="#fff" stroke="#333" stroke-width="0.5" stroke-linejoin="round"/><rect x="1146.5" y="49.5" width="5.2" height="20" fill="#fff" stroke="#222" stroke-width="1"/><path d="M1147 52.0h3.5 M1147 54.5h2.5 M1147 57.0h3.5 M1147 59.5h2.5 M1147 62.0h3.5 M1147 64.5h2.5 M1147 67.0h3.5" stroke="#222" stroke-width="0.8"/><path d="M1175 51.4h17.9v4.5h-5.9v13.8h-6v-13.8h-6z" fill="#2a2a2a"/><g transform="translate(1229.4,57.0) rotate(45) scale(1.12)"><path d="M-7 9 V0 A7 7 0 0 1 7 0 V9 H3 V0 A3 3 0 0 0 -3 0 V9 Z" fill="#fff" stroke="#333" stroke-width="0.9"/><rect x="-7" y="6" width="4" height="3.6" fill="#2a2a2a"/><rect x="3" y="6" width="4" height="3.6" fill="#2a2a2a"/></g><polygon points="1302.6,54 1313.2,49 1323.6,54 1313.2,58.8" fill="#fff" stroke="#333" stroke-width="0.6"/><polygon points="1302.6,56.0 1313.2,60.8 1313.2,62.6 1302.6,57.8" fill="#2a2a2a"/><polygon points="1302.6,59.2 1313.2,64.0 1313.2,65.8 1302.6,61.0" fill="#2a2a2a"/><polygon points="1302.6,62.4 1313.2,67.2 1313.2,69.0 1302.6,64.2" fill="#2a2a2a"/><polygon points="1302.6,65.6 1313.2,70.4 1313.2,72.2 1302.6,67.4" fill="#2a2a2a"/><clipPath id="matc"><polygon points="1313.2,58.8 1323.6,54 1323.6,65 1313.2,70"/></clipPath><g clip-path="url(#matc)"><path d="M1309.0 72 L1319.0 50 M1312.1 72 L1322.1 50 M1315.2 72 L1325.2 50 M1318.3 72 L1328.3 50 M1321.4 72 L1331.4 50 M1324.5 72 L1334.5 50 M1327.6 72 L1337.6 50" stroke="#2a2a2a" stroke-width="1.6"/></g><path d="M1871.1 222.8v17M1862.6 231.3h17" stroke="#222" stroke-width="1.1" fill="none"/><path d="M1871.1 220.8l-2.2 3h4.4zM1871.1 241.8l-2.2 -3h4.4zM1860.6 231.3l3 -2.2v4.4zM1881.6 231.3l-3 -2.2v4.4z" fill="#222"/><polygon points="1865.3,261.9 1870.5,264.2 1870.5,271.2 1865.3,268.9" fill="#6a6a6a" stroke="#333" stroke-width="0.5" stroke-linejoin="round"/><polygon points="1870.5,264.2 1875.7,261.9 1875.7,268.9 1870.5,271.2" fill="#2b2b2b" stroke="#333" stroke-width="0.5" stroke-linejoin="round"/><polygon points="1865.3,261.9 1870.5,259.6 1875.7,261.9 1870.5,264.2" fill="#fff" stroke="#333" stroke-width="0.5" stroke-linejoin="round"/><path d="M1873.1 255.1 A11 11 0 0 1 1881.1 268.6" stroke="#222" stroke-width="1" fill="none"/><path d="M1869.1 276.1 A11 11 0 0 1 1861.1 262.6" stroke="#222" stroke-width="1" fill="none"/><polygon points="1870.1,254.1 1874.6,253.1 1873.6,257.6" fill="#222"/><polygon points="1872.1,277.1 1867.6,278.1 1868.6,273.6" fill="#222"/><circle cx="1869.7" cy="299.6" r="7.3" fill="#fff" stroke="#222" stroke-width="1.1"/><path d="M1874.8 304.8L1878.6 308.8" stroke="#222" stroke-width="4"/><rect x="1858" y="322" width="26" height="1" fill="url(#seph)"/><rect x="1858" y="506" width="26" height="1" fill="url(#seph)"/><path d="M1861 339.5v-4.5h4.5M1876.6 335h4.5v4.5M1881.1 350v4.5h-4.5M1865.5 354.5h-4.5v-4.5" stroke="#222" stroke-width="1.1" fill="none"/><polygon points="1865.5,340.7 1871.1,343.1 1871.1,350.7 1865.5,348.3" fill="#6a6a6a" stroke="#333" stroke-width="0.5" stroke-linejoin="round"/><polygon points="1871.1,343.1 1876.7,340.7 1876.7,348.3 1871.1,350.7" fill="#2b2b2b" stroke="#333" stroke-width="0.5" stroke-linejoin="round"/><polygon points="1865.5,340.7 1871.1,338.3 1876.7,340.7 1871.1,343.1" fill="#fff" stroke="#333" stroke-width="0.5" stroke-linejoin="round"/><circle cx="1875.5" cy="376.5" r="6.2" fill="#f3f3f3" stroke="#333" stroke-width="0.8"/><polygon points="1860.6,377.0 1868.2,380.5 1868.2,390.0 1860.6,386.5" fill="#6a6a6a" stroke="#333" stroke-width="0.5" stroke-linejoin="round"/><polygon points="1868.2,380.5 1875.8,377.0 1875.8,386.5 1868.2,390.0" fill="#2b2b2b" stroke="#333" stroke-width="0.5" stroke-linejoin="round"/><polygon points="1860.6,377.0 1868.2,373.5 1875.8,377.0 1868.2,380.5" fill="#f5f5f5" stroke="#333" stroke-width="0.5" stroke-linejoin="round"/><path d="M1861.0 414.6 Q1871.1 401.0 1881.2 414.6 Q1871.1 428.2 1861.0 414.6 Z" fill="#fff" stroke="#222" stroke-width="1.1"/><circle cx="1871.1" cy="414.6" r="4.1" fill="#666"/><path d="M1860.5 443.5h14l6.8 12.8h-17.5z M1861.5 447.7h15 M1862.5 452h16.5 M1866.5 443.5l2.5 12.8 M1871.5 443.5l4.8 12.8" stroke="#222" stroke-width="1" fill="#fff"/><path d="M1868.4 445.5 Q1875.0 437.1 1881.6 445.5 Q1875.0 453.9 1868.4 445.5 Z" fill="#fff" stroke="#222" stroke-width="1.1"/><circle cx="1875.0" cy="445.5" r="2.9" fill="#666"/><path d="M1861 479h4.5l1.8-3h7.4l1.8 3h4.6v14.8h-20.1z" fill="#333"/><circle cx="1871" cy="486" r="4.6" fill="#fff"/><circle cx="1871" cy="486" r="2.6" fill="#333"/><rect x="1877" y="481" width="2" height="1.6" fill="#fff"/><polygon points="1860.5,526.5 1869.5,530.5 1869.5,540.5 1860.5,536.2" fill="#6a6a6a"/><polygon points="1869.5,530.5 1877.5,527 1877.5,537 1869.5,540.5" fill="#2b2b2b"/><polygon points="1860.5,526.5 1868.5,522.8 1877.5,527 1869.5,530.5" fill="#fff" stroke="#333" stroke-width="0.6"/><path d="M1864.5 524.6l9 4.2" stroke="#333" stroke-width="0.6"/><rect x="1859.4" y="520.6" width="1.8" height="1.8" fill="#222"/><rect x="1859.4" y="538.1" width="1.8" height="1.8" fill="#222"/><rect x="1880.1" y="538.1" width="1.8" height="1.8" fill="#222"/><g transform="translate(1876.5,522.5) rotate(35)"><path d="M-4.5 5.5 V0 A4.5 4.5 0 0 1 4.5 0 V5.5 H2 V0 A2 2 0 0 0 -2 0 V5.5 Z" fill="#fff" stroke="#333" stroke-width="0.8"/><rect x="-4.5" y="3.8" width="2.5" height="2.2" fill="#222"/><rect x="2" y="3.8" width="2.5" height="2.2" fill="#222"/></g><polygon points="1859.5,560.8 1862.3,562.1 1862.3,565.7 1859.5,564.4" fill="#333" stroke="#333" stroke-width="0.5" stroke-linejoin="round"/><polygon points="1862.3,562.1 1865.1,560.8 1865.1,564.4 1862.3,565.7" fill="#222" stroke="#333" stroke-width="0.5" stroke-linejoin="round"/><polygon points="1859.5,560.8 1862.3,559.5 1865.1,560.8 1862.3,562.1" fill="#444" stroke="#333" stroke-width="0.5" stroke-linejoin="round"/><path d="M1861 567 C1860 575 1868 580 1881 579.5" stroke="#222" stroke-width="1.2" stroke-dasharray="1.2 1.2" fill="none"/><g transform="translate(1874,568.5) rotate(40)"><path d="M-6.5 8 V0 A6.5 6.5 0 0 1 6.5 0 V8 H2.8 V0 A2.8 2.8 0 0 0 -2.8 0 V8 Z" fill="#fff" stroke="#333" stroke-width="0.9"/><rect x="-6.5" y="5" width="3.7" height="3.3" fill="#222"/><rect x="2.8" y="5" width="3.7" height="3.3" fill="#222"/></g><path d="M1862 579.5L1882.5 560" stroke="#222" stroke-width="1.6"/><polygon points="1913,588 1919,581.5 1919,594.5" fill="#fff"/></svg>
</body></html>
